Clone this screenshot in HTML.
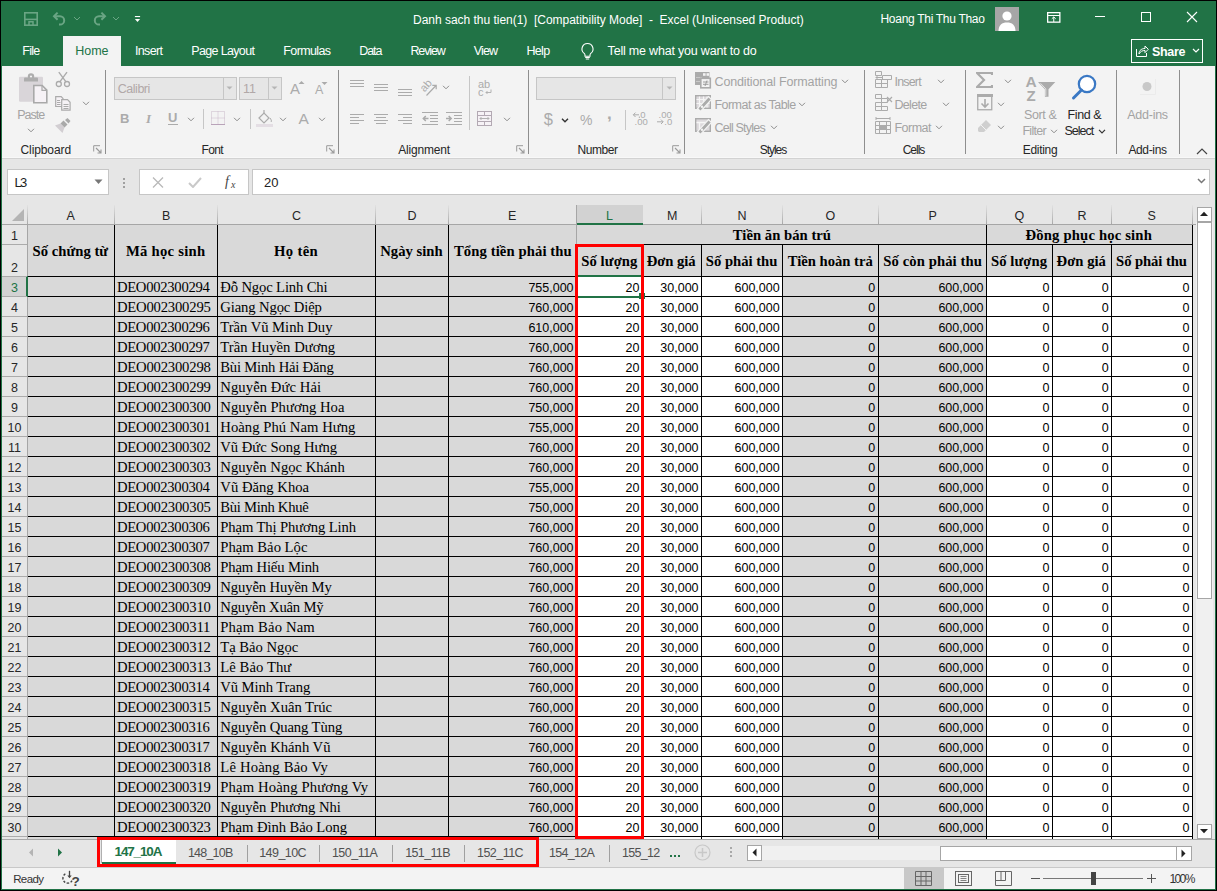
<!DOCTYPE html>
<html><head><meta charset="utf-8"><title>Excel</title>
<style>
html,body{margin:0;padding:0;}
body{width:1217px;height:891px;overflow:hidden;position:relative;font-family:"Liberation Sans",sans-serif;}
.r{position:absolute;box-sizing:content-box;}
.t{position:absolute;white-space:nowrap;}
</style></head><body>
<div class="r" style="left:0px;top:0px;width:1217px;height:891px;background:#000;"></div>
<div class="r" style="left:1px;top:1px;width:1215px;height:889px;background:#217346;"></div>
<svg class="r" style="left:23px;top:11px;" width="16" height="16" viewBox="0 0 16 16"><rect x="1.8" y="1.8" width="12.4" height="12.4" fill="none" stroke="#6aa584" stroke-width="1.6"/><rect x="1" y="7.6" width="14" height="1.6" fill="#6aa584"/><path d="M6 14V10.8h4V14" fill="none" stroke="#6aa584" stroke-width="1.5"/></svg>
<svg class="r" style="left:51px;top:10px;" width="18" height="18" viewBox="0 0 18 18"><path d="M3 6.2h6a4.2 4.2 0 0 1 0 8.4H8" fill="none" stroke="#6aa584" stroke-width="2"/><path d="M6.6 2.6L3 6.2l3.6 3.6" fill="none" stroke="#6aa584" stroke-width="2"/></svg>
<svg class="r" style="left:73px;top:16px;" width="8" height="6" viewBox="0 0 8 6"><path d="M1 1l3 3 3-3" fill="none" stroke="#6aa584" stroke-width="1"/></svg>
<svg class="r" style="left:90px;top:10px;" width="18" height="18" viewBox="0 0 18 18"><path d="M15 6.2H9a4.2 4.2 0 0 0 0 8.4h1" fill="none" stroke="#6aa584" stroke-width="2"/><path d="M11.4 2.6L15 6.2l-3.6 3.6" fill="none" stroke="#6aa584" stroke-width="2"/></svg>
<svg class="r" style="left:112px;top:16px;" width="8" height="6" viewBox="0 0 8 6"><path d="M1 1l3 3 3-3" fill="none" stroke="#6aa584" stroke-width="1"/></svg>
<svg class="r" style="left:134px;top:15px;" width="7" height="8" viewBox="0 0 7 8"><rect x=".9" y="1" width="5.2" height="1.1" fill="#fff"/><path d="M.9 4h5.2L3.5 7z" fill="#fff"/></svg>
<div class="t" style="left:413.00px;top:9.84px;font-size:12px;color:#fff;font-family:'Liberation Sans', sans-serif;line-height:20px;letter-spacing:-0.019px;">Danh sach thu tien(1)&nbsp; [Compatibility Mode]&nbsp; -&nbsp; Excel (Unlicensed Product)</div>
<div class="t" style="left:880.50px;top:8.84px;font-size:12px;color:#fff;font-family:'Liberation Sans', sans-serif;line-height:20px;letter-spacing:-0.294px;">Hoang Thi Thu Thao</div>
<div class="r" style="left:995px;top:7px;width:24px;height:24px;background:#a6a6a6;"></div>
<svg class="r" style="left:995px;top:7px;" width="24" height="24" viewBox="0 0 24 24"><circle cx="12" cy="9" r="4.6" fill="#fff"/><path d="M3.5 24c0-6 3.5-8.5 8.5-8.5s8.5 2.5 8.5 8.5z" fill="#fff"/></svg>
<svg class="r" style="left:1047px;top:12px;" width="14" height="11" viewBox="0 0 14 11"><rect x=".65" y=".65" width="12.2" height="9.5" fill="none" stroke="#fff" stroke-width="1.3"/><path d="M.5 3.5h12.5" stroke="#fff" stroke-width="1"/><path d="M6.75 5v5M4.8 6.8l1.95-1.9 1.95 1.9" fill="none" stroke="#fff" stroke-width="1"/></svg>
<div class="r" style="left:1095px;top:16px;width:10px;height:1px;background:#fff;"></div>
<svg class="r" style="left:1140px;top:11px;" width="12" height="12" viewBox="0 0 12 12"><rect x="1.5" y="1.5" width="9" height="9" fill="none" stroke="#fff" stroke-width="1"/></svg>
<svg class="r" style="left:1186px;top:11px;" width="12" height="12" viewBox="0 0 12 12"><path d="M1 1L11 11M11 1L1 11" stroke="#fff" stroke-width="1.1"/></svg>
<div class="r" style="left:63px;top:36px;width:58px;height:30px;background:#f3f3f3;"></div>
<div class="t" style="left:22.30px;top:40.67px;font-size:12.5px;color:#fff;font-family:'Liberation Sans', sans-serif;line-height:20px;letter-spacing:-0.733px;">File</div>
<div class="t" style="left:135.00px;top:40.67px;font-size:12.5px;color:#fff;font-family:'Liberation Sans', sans-serif;line-height:20px;letter-spacing:-0.660px;">Insert</div>
<div class="t" style="left:191.30px;top:40.67px;font-size:12.5px;color:#fff;font-family:'Liberation Sans', sans-serif;line-height:20px;letter-spacing:-0.660px;">Page Layout</div>
<div class="t" style="left:283.30px;top:40.67px;font-size:12.5px;color:#fff;font-family:'Liberation Sans', sans-serif;line-height:20px;letter-spacing:-0.614px;">Formulas</div>
<div class="t" style="left:359.20px;top:40.67px;font-size:12.5px;color:#fff;font-family:'Liberation Sans', sans-serif;line-height:20px;letter-spacing:-1.067px;">Data</div>
<div class="t" style="left:410.40px;top:40.67px;font-size:12.5px;color:#fff;font-family:'Liberation Sans', sans-serif;line-height:20px;letter-spacing:-1.100px;">Review</div>
<div class="t" style="left:473.80px;top:40.67px;font-size:12.5px;color:#fff;font-family:'Liberation Sans', sans-serif;line-height:20px;letter-spacing:-0.900px;">View</div>
<div class="t" style="left:526.40px;top:40.67px;font-size:12.5px;color:#fff;font-family:'Liberation Sans', sans-serif;line-height:20px;letter-spacing:-0.667px;">Help</div>
<div class="t" style="left:75.30px;top:40.67px;font-size:12.5px;color:#217346;font-family:'Liberation Sans', sans-serif;line-height:20px;letter-spacing:-0.067px;">Home</div>
<svg class="r" style="left:579px;top:42px;" width="17" height="18" viewBox="0 0 17 18"><path d="M8.5 1.5a5.5 5.5 0 0 0-3.3 9.9c.6.5.8 1.1.8 1.8v1h5v-1c0-.7.2-1.3.8-1.8A5.5 5.5 0 0 0 8.5 1.5z" fill="none" stroke="#fff" stroke-width="1.1"/><path d="M6.2 15.5h4.6M6.8 17h3.4" stroke="#fff" stroke-width="1"/></svg>
<div class="t" style="left:607.60px;top:40.67px;font-size:12.5px;color:#fff;font-family:'Liberation Sans', sans-serif;line-height:20px;letter-spacing:-0.196px;">Tell me what you want to do</div>
<div class="r" style="left:1131px;top:39px;width:70px;height:22px;border:1px solid #fff;"></div>
<svg class="r" style="left:1135px;top:44px;" width="14" height="14" viewBox="0 0 14 14"><path d="M1.5 5v7.5h10V9" fill="none" stroke="#fff" stroke-width="1"/><path d="M4 10c0-4 3-5.5 6-5.5V2l3.3 3.3L10 8.6V6.5c-2.5 0-4.6.8-6 3.5z" fill="none" stroke="#fff" stroke-width="1"/></svg>
<div class="t" style="left:1152.00px;top:41.67px;font-size:12.5px;color:#fff;font-family:'Liberation Sans', sans-serif;line-height:20px;font-weight:bold;letter-spacing:-0.325px;">Share</div>
<svg class="r" style="left:1192px;top:48px;" width="8" height="6" viewBox="0 0 8 6"><path d="M1 1l3 3 3-3" fill="none" stroke="#fff" stroke-width="1.2"/></svg>
<div class="r" style="left:2px;top:66px;width:1213px;height:92px;background:#f3f3f3;"></div>
<div class="r" style="left:2px;top:157px;width:1213px;height:1px;background:#f8f8f8;"></div>
<div class="r" style="left:2px;top:158px;width:1213px;height:1px;background:#d2d2d2;"></div>
<div class="r" style="left:105px;top:70px;width:1px;height:84px;background:#8e8e8e;"></div>
<div class="r" style="left:338px;top:70px;width:1px;height:84px;background:#8e8e8e;"></div>
<div class="r" style="left:528px;top:70px;width:1px;height:84px;background:#8e8e8e;"></div>
<div class="r" style="left:684px;top:70px;width:1px;height:84px;background:#8e8e8e;"></div>
<div class="r" style="left:864px;top:70px;width:1px;height:84px;background:#8e8e8e;"></div>
<div class="r" style="left:965px;top:70px;width:1px;height:84px;background:#8e8e8e;"></div>
<div class="r" style="left:1116px;top:70px;width:1px;height:84px;background:#8e8e8e;"></div>
<div class="r" style="left:1179px;top:70px;width:1px;height:84px;background:#8e8e8e;"></div>
<svg class="r" style="left:18px;top:72px;" width="30" height="33" viewBox="0 0 30 33"><rect x="1" y="4.8" width="24" height="25" rx="1.2" fill="#d9d5d9"/><path d="M6 9.5V6.5a1 1 0 0 1 1-1h12a1 1 0 0 1 1 1v3z" fill="#adadad"/><circle cx="13" cy="4.5" r="3.2" fill="#adadad"/><circle cx="13" cy="4.5" r="1.1" fill="#f3f3f3"/><path d="M15.8 13.5h8.4l4.6 4.6v12.7h-13z" fill="#f6f2f6" stroke="#a9a9a9" stroke-width="1.6"/><path d="M24 13.5v4.8h4.8" fill="none" stroke="#a9a9a9" stroke-width="1.2"/></svg>
<div class="t" style="left:17.30px;top:104.67px;font-size:12.5px;color:#a3a3a3;font-family:'Liberation Sans', sans-serif;line-height:20px;letter-spacing:-1.025px;">Paste</div>
<svg class="r" style="left:27px;top:128px;" width="8" height="5" viewBox="0 0 8 5"><path d="M1 .8l3 3 3-3" fill="none" stroke="#8c8c8c" stroke-width="1"/></svg>
<svg class="r" style="left:54px;top:71px;" width="17" height="17" viewBox="0 0 17 17"><circle cx="4.8" cy="13" r="2.5" fill="none" stroke="#ababab" stroke-width="1.3"/><circle cx="13" cy="13" r="2.5" fill="none" stroke="#ababab" stroke-width="1.3"/><path d="M5.8 10.8L13 1.2M12 10.8L4.8 1.2" stroke="#ababab" stroke-width="1.4"/></svg>
<svg class="r" style="left:55px;top:96px;" width="16" height="15" viewBox="0 0 16 15"><path d="M.7 .7h5.5l1.8 1.8v8h-7.3z" fill="#f6f2f6" stroke="#ababab" stroke-width="1.2"/><path d="M6.7 3.7h5.8l2.6 2.6v7.9h-8.4z" fill="#f6f2f6" stroke="#ababab" stroke-width="1.2"/><path d="M2 4.5h3M2 6.5h3.5M2 8.5h3.5M8.5 8.5h5M8.5 10.5h5M8.5 12.5h5" stroke="#ababab" stroke-width="1"/></svg>
<svg class="r" style="left:82px;top:101px;" width="8" height="5" viewBox="0 0 8 5"><path d="M1 .8l3 3 3-3" fill="none" stroke="#8c8c8c" stroke-width="1"/></svg>
<svg class="r" style="left:54px;top:118px;" width="18" height="16" viewBox="0 0 18 16"><path d="M1 7.5l5.5-2 4 4-2 5.5z" fill="#d2ced2"/><path d="M6.5 5.5l3-3 4 4-3 3z" fill="#a9a9a9"/><path d="M11 2l2.5-2 3 3-2 2.5z" fill="#a9a9a9"/></svg>
<div class="t" style="left:20.50px;top:139.84px;font-size:12px;color:#262626;font-family:'Liberation Sans', sans-serif;line-height:20px;letter-spacing:-0.100px;">Clipboard</div>
<svg class="r" style="left:93px;top:145px;" width="9" height="9" viewBox="0 0 9 9"><path d="M.7 6.5V.7h6.3" fill="none" stroke="#9a9a9a" stroke-width="1"/><path d="M3 3l5 5M8 4.5V8H4.5" fill="none" stroke="#9a9a9a" stroke-width="1.1"/></svg>
<div class="r" style="left:114px;top:77px;width:121px;height:21px;border:1px solid #c6c6c6;background:#e6e6e6"></div>
<div class="r" style="left:223px;top:78px;width:1px;height:21px;background:#c6c6c6;"></div>
<div class="t" style="left:117.80px;top:78.67px;font-size:12.5px;color:#b1a8a8;font-family:'Liberation Sans', sans-serif;line-height:20px;letter-spacing:-0.483px;">Calibri</div>
<svg class="r" style="left:225px;top:85px;" width="9" height="6" viewBox="0 0 9 6"><path d="M1.5 1.5h6l-3 3z" fill="#b5b5b5"/></svg>
<div class="r" style="left:239px;top:77px;width:41px;height:21px;border:1px solid #c6c6c6;background:#e6e6e6"></div>
<div class="r" style="left:268px;top:78px;width:1px;height:21px;background:#c6c6c6;"></div>
<div class="t" style="left:243.00px;top:78.67px;font-size:12.5px;color:#b1a8a8;font-family:'Liberation Sans', sans-serif;line-height:20px;">11</div>
<svg class="r" style="left:270px;top:85px;" width="9" height="6" viewBox="0 0 9 6"><path d="M1.5 1.5h6l-3 3z" fill="#b5b5b5"/></svg>
<div class="t" style="left:290.00px;top:78.80px;font-size:15px;color:#ababab;font-family:'Liberation Sans', sans-serif;line-height:20px;">A</div>
<svg class="r" style="left:298px;top:80px;" width="7" height="5" viewBox="0 0 7 5"><path d="M.5 4l3-3 3 3z" fill="#ababab"/></svg>
<div class="t" style="left:315.00px;top:79.67px;font-size:12.5px;color:#ababab;font-family:'Liberation Sans', sans-serif;line-height:20px;">A</div>
<svg class="r" style="left:321px;top:81px;" width="7" height="5" viewBox="0 0 7 5"><path d="M.5 1l3 3 3-3z" fill="#ababab"/></svg>
<div class="t" style="left:120.00px;top:108.50px;font-size:13px;color:#ababab;font-family:'Liberation Sans', sans-serif;line-height:20px;font-weight:bold;">B</div>
<div class="t" style="left:146.00px;top:108.61px;font-size:13px;color:#ababab;font-family:'Liberation Serif', serif;line-height:20px;font-weight:bold;font-style:italic;">I</div>
<div class="t" style="left:168.00px;top:107.50px;font-size:13px;color:#ababab;font-family:'Liberation Sans', sans-serif;line-height:20px;font-weight:bold;">U</div>
<div class="r" style="left:168px;top:124px;width:10px;height:1px;background:#ababab;"></div>
<svg class="r" style="left:187px;top:117px;" width="8" height="5" viewBox="0 0 8 5"><path d="M1 .8l3 3 3-3" fill="none" stroke="#8c8c8c" stroke-width="1"/></svg>
<div class="r" style="left:203px;top:109px;width:1px;height:20px;background:#c6c6c6;"></div>
<svg class="r" style="left:211px;top:111px;" width="15" height="14" viewBox="0 0 15 14"><path d="M.5 .5h13v13h-13zM7 .5v13M.5 7h13" fill="none" stroke="#c9b9c9" stroke-width="1" stroke-dasharray="1 1"/><path d="M0 13.5h14" stroke="#b9a3b9" stroke-width="1"/></svg>
<svg class="r" style="left:233px;top:117px;" width="8" height="5" viewBox="0 0 8 5"><path d="M1 .8l3 3 3-3" fill="none" stroke="#8c8c8c" stroke-width="1"/></svg>
<div class="r" style="left:250px;top:109px;width:1px;height:20px;background:#c6c6c6;"></div>
<svg class="r" style="left:256px;top:109px;" width="18" height="19" viewBox="0 0 18 19"><path d="M3 9l5-5 5 5-5 5z" fill="none" stroke="#ababab" stroke-width="1.2"/><path d="M8 4V1" stroke="#ababab" stroke-width="1.2"/><path d="M14 9c1 1.5 2 3 1 4" stroke="#ababab" fill="none"/><rect x="0" y="15" width="17" height="3" fill="#e4dee4"/></svg>
<svg class="r" style="left:279px;top:117px;" width="8" height="5" viewBox="0 0 8 5"><path d="M1 .8l3 3 3-3" fill="none" stroke="#8c8c8c" stroke-width="1"/></svg>
<div class="t" style="left:298.50px;top:108.63px;font-size:15.5px;color:#ababab;font-family:'Liberation Sans', sans-serif;line-height:20px;">A</div>
<svg class="r" style="left:318px;top:117px;" width="8" height="5" viewBox="0 0 8 5"><path d="M1 .8l3 3 3-3" fill="none" stroke="#8c8c8c" stroke-width="1"/></svg>
<div class="t" style="left:201.60px;top:139.84px;font-size:12px;color:#262626;font-family:'Liberation Sans', sans-serif;line-height:20px;letter-spacing:-0.633px;">Font</div>
<svg class="r" style="left:326px;top:145px;" width="9" height="9" viewBox="0 0 9 9"><path d="M.7 6.5V.7h6.3" fill="none" stroke="#9a9a9a" stroke-width="1"/><path d="M3 3l5 5M8 4.5V8H4.5" fill="none" stroke="#9a9a9a" stroke-width="1.1"/></svg>
<svg class="r" style="left:350px;top:80px;" width="16" height="12" viewBox="0 0 16 12"><rect x="0" y="0" width="14" height="1" fill="#ababab"/><rect x="0" y="3" width="14" height="1" fill="#ababab"/><rect x="0" y="6" width="14" height="1" fill="#ababab"/></svg>
<svg class="r" style="left:374px;top:84px;" width="16" height="12" viewBox="0 0 16 12"><rect x="0" y="0" width="14" height="1" fill="#ababab"/><rect x="0" y="3" width="14" height="1" fill="#ababab"/><rect x="0" y="6" width="14" height="1" fill="#ababab"/></svg>
<svg class="r" style="left:398px;top:89px;" width="16" height="12" viewBox="0 0 16 12"><rect x="0" y="0" width="14" height="1" fill="#ababab"/><rect x="0" y="3" width="14" height="1" fill="#ababab"/><rect x="0" y="6" width="14" height="1" fill="#ababab"/></svg>
<svg class="r" style="left:421px;top:79px;" width="19" height="18" viewBox="0 0 19 18"><text x="0" y="0" font-size="11" fill="#ababab" font-family="Liberation Sans" transform="translate(3.5 13.5) rotate(-48)">ab</text><path d="M5.5 16.5l9.5-10M11.3 6.3h3.9v3.9" fill="none" stroke="#ababab" stroke-width="1.2"/></svg>
<svg class="r" style="left:442px;top:85px;" width="8" height="5" viewBox="0 0 8 5"><path d="M1 .8l3 3 3-3" fill="none" stroke="#8c8c8c" stroke-width="1"/></svg>
<svg class="r" style="left:350px;top:114px;" width="16" height="12" viewBox="0 0 16 12"><rect x="0" y="0" width="14" height="1" fill="#ababab"/><rect x="0" y="3" width="9" height="1" fill="#ababab"/><rect x="0" y="6" width="14" height="1" fill="#ababab"/><rect x="0" y="9" width="9" height="1" fill="#ababab"/></svg>
<svg class="r" style="left:374px;top:114px;" width="16" height="12" viewBox="0 0 16 12"><rect x="0" y="0" width="14" height="1" fill="#ababab"/><rect x="2" y="3" width="10" height="1" fill="#ababab"/><rect x="0" y="6" width="14" height="1" fill="#ababab"/><rect x="2" y="9" width="10" height="1" fill="#ababab"/></svg>
<svg class="r" style="left:398px;top:114px;" width="16" height="12" viewBox="0 0 16 12"><rect x="0" y="0" width="14" height="1" fill="#ababab"/><rect x="5" y="3" width="9" height="1" fill="#ababab"/><rect x="0" y="6" width="14" height="1" fill="#ababab"/><rect x="5" y="9" width="9" height="1" fill="#ababab"/></svg>
<svg class="r" style="left:422px;top:112px;" width="17" height="14" viewBox="0 0 17 14"><rect x="0" y="0" width="16" height="1" fill="#ababab"/><rect x="8" y="3" width="8" height="1" fill="#ababab"/><rect x="8" y="6" width="8" height="1" fill="#ababab"/><rect x="8" y="9" width="8" height="1" fill="#ababab"/><rect x="0" y="12" width="16" height="1" fill="#ababab"/><path d="M6.5 6.5H1.5M3.8 4L1.3 6.5 3.8 9" fill="none" stroke="#ababab" stroke-width="1.5"/></svg>
<svg class="r" style="left:446px;top:112px;" width="17" height="14" viewBox="0 0 17 14"><rect x="0" y="0" width="16" height="1" fill="#ababab"/><rect x="8" y="3" width="8" height="1" fill="#ababab"/><rect x="8" y="6" width="8" height="1" fill="#ababab"/><rect x="8" y="9" width="8" height="1" fill="#ababab"/><rect x="0" y="12" width="16" height="1" fill="#ababab"/><path d="M0 6.5h5M2.7 4l2.5 2.5L2.7 9" fill="none" stroke="#ababab" stroke-width="1.5"/></svg>
<div class="r" style="left:469px;top:76px;width:1px;height:54px;background:#c6c6c6;"></div>
<div class="t" style="left:478.00px;top:74.19px;font-size:11px;color:#ababab;font-family:'Liberation Sans', sans-serif;line-height:20px;">ab</div>
<div class="t" style="left:478.00px;top:82.19px;font-size:11px;color:#ababab;font-family:'Liberation Sans', sans-serif;line-height:20px;">c</div>
<svg class="r" style="left:485px;top:89px;" width="7" height="6" viewBox="0 0 7 6"><path d="M6 .5v3H1M2.5 2L1 3.5 2.5 5" fill="none" stroke="#ababab" stroke-width=".9"/></svg>
<svg class="r" style="left:477px;top:111px;" width="16" height="15" viewBox="0 0 16 15"><rect x=".5" y=".5" width="14" height="14" fill="#f6f2f6" stroke="#b3a9b3"/><path d="M.5 4.5h14M.5 10.5h14M7.5 .5v4M7.5 10.5v4" stroke="#b3a9b3"/><path d="M3 7.5h9M4.5 6l-1.5 1.5 1.5 1.5M10.5 6L12 7.5 10.5 9" fill="none" stroke="#aaa" stroke-width=".9"/></svg>
<svg class="r" style="left:503px;top:117px;" width="8" height="5" viewBox="0 0 8 5"><path d="M1 .8l3 3 3-3" fill="none" stroke="#8c8c8c" stroke-width="1"/></svg>
<div class="t" style="left:398.20px;top:139.84px;font-size:12px;color:#262626;font-family:'Liberation Sans', sans-serif;line-height:20px;letter-spacing:-0.175px;">Alignment</div>
<svg class="r" style="left:516px;top:145px;" width="9" height="9" viewBox="0 0 9 9"><path d="M.7 6.5V.7h6.3" fill="none" stroke="#9a9a9a" stroke-width="1"/><path d="M3 3l5 5M8 4.5V8H4.5" fill="none" stroke="#9a9a9a" stroke-width="1.1"/></svg>
<div class="r" style="left:536px;top:77px;width:138px;height:21px;border:1px solid #c6c6c6;background:#e6e6e6"></div>
<div class="r" style="left:662px;top:78px;width:1px;height:21px;background:#c6c6c6;"></div>
<svg class="r" style="left:665px;top:85px;" width="9" height="6" viewBox="0 0 9 6"><path d="M1.5 1.5h6l-3 3z" fill="#b5b5b5"/></svg>
<div class="t" style="left:543.70px;top:108.78px;font-size:16.5px;color:#ababab;font-family:'Liberation Sans', sans-serif;line-height:20px;">$</div>
<svg class="r" style="left:561px;top:118px;" width="8" height="5" viewBox="0 0 8 5"><path d="M1 .8l3 3 3-3" fill="none" stroke="#333" stroke-width="1.4"/></svg>
<div class="t" style="left:580.00px;top:110.15px;font-size:14px;color:#ababab;font-family:'Liberation Sans', sans-serif;line-height:20px;">%</div>
<div class="t" style="left:607.00px;top:103.61px;font-size:17px;color:#ababab;font-family:'Liberation Sans', sans-serif;line-height:20px;font-weight:bold;">,</div>
<div class="r" style="left:625px;top:110px;width:1px;height:20px;background:#c6c6c6;"></div>
<svg class="r" style="left:632px;top:111px;" width="17" height="15" viewBox="0 0 17 15"><text x="8.3" y="7" font-size="9.5" fill="#ababab" font-family="Liberation Sans">0</text><text x="2.5" y="14" font-size="9.5" fill="#ababab" font-family="Liberation Sans">.00</text><path d="M7 3.8H1.5M3.5 1.6L1.3 3.8 3.5 6" fill="none" stroke="#ababab" stroke-width="1"/><rect x="6.8" y="5.6" width="1.2" height="1.2" fill="#ababab"/></svg>
<svg class="r" style="left:656px;top:111px;" width="17" height="15" viewBox="0 0 17 15"><text x="2.5" y="7" font-size="9.5" fill="#ababab" font-family="Liberation Sans">.00</text><text x="8.3" y="14" font-size="9.5" fill="#ababab" font-family="Liberation Sans">.0</text><path d="M1 10.8h6M5 8.6l2.2 2.2L5 13" fill="none" stroke="#ababab" stroke-width="1"/></svg>
<div class="t" style="left:577.50px;top:139.84px;font-size:12px;color:#262626;font-family:'Liberation Sans', sans-serif;line-height:20px;letter-spacing:-0.460px;">Number</div>
<svg class="r" style="left:672px;top:145px;" width="9" height="9" viewBox="0 0 9 9"><path d="M.7 6.5V.7h6.3" fill="none" stroke="#9a9a9a" stroke-width="1"/><path d="M3 3l5 5M8 4.5V8H4.5" fill="none" stroke="#9a9a9a" stroke-width="1.1"/></svg>
<svg class="r" style="left:694px;top:71px;" width="18" height="18" viewBox="0 0 18 18"><rect x="1" y="1" width="14.5" height="13" fill="#ababab"/><rect x="9" y="2.2" width="2.6" height="2.6" fill="#f3f3f3"/><rect x="12.5" y="2.2" width="2.6" height="2.6" fill="#f3f3f3"/><rect x="2" y="6" width="6" height="1" fill="#c8c8c8"/><rect x="2" y="10" width="6" height="1" fill="#c8c8c8"/><rect x="6.8" y="7.3" width="9.5" height="9.5" fill="#f3f3f3" stroke="#ababab" stroke-width="1.6"/><path d="M9 11h5.5M9 13.3h5.5M13 9.5l-2 5.5" stroke="#9d9d9d" stroke-width="1"/></svg>
<div class="t" style="left:714.50px;top:71.67px;font-size:12.5px;color:#a3a3a3;font-family:'Liberation Sans', sans-serif;line-height:20px;letter-spacing:-0.129px;">Conditional Formatting</div>
<svg class="r" style="left:841px;top:79px;" width="8" height="5" viewBox="0 0 8 5"><path d="M1 .8l3 3 3-3" fill="none" stroke="#8c8c8c" stroke-width="1"/></svg>
<svg class="r" style="left:694px;top:94px;" width="18" height="18" viewBox="0 0 18 18"><rect x="1.7" y="1.7" width="14.6" height="12.6" fill="#dcd9dc" stroke="#ababab" stroke-width="1.4"/><path d="M2.5 5.5h13M2.5 9.5h13M5.5 2.5v11M9.5 2.5v11M13 2.5v11" stroke="#f6f6f6" stroke-width="1.2"/><path d="M3.5 14.6L14.5 2.6 17.5 5.4 6.5 17.4z" fill="#ababab" stroke="#f3f3f3" stroke-width="1.3"/><circle cx="8" cy="12.8" r="1.2" fill="#f3f3f3"/></svg>
<div class="t" style="left:714.50px;top:94.67px;font-size:12.5px;color:#a3a3a3;font-family:'Liberation Sans', sans-serif;line-height:20px;letter-spacing:-0.543px;">Format as Table</div>
<svg class="r" style="left:798px;top:102px;" width="8" height="5" viewBox="0 0 8 5"><path d="M1 .8l3 3 3-3" fill="none" stroke="#8c8c8c" stroke-width="1"/></svg>
<svg class="r" style="left:694px;top:117px;" width="18" height="18" viewBox="0 0 18 18"><rect x="1.7" y="1.7" width="14.6" height="12.6" fill="#dcd9dc" stroke="#ababab" stroke-width="1.4"/><path d="M2.5 5.5h13M5.5 5.5v8" stroke="#f6f6f6" stroke-width="1.4"/><path d="M3.5 14.6L14.5 2.6 17.5 5.4 6.5 17.4z" fill="#ababab" stroke="#f3f3f3" stroke-width="1.3"/><circle cx="8" cy="12.8" r="1.2" fill="#f3f3f3"/></svg>
<div class="t" style="left:714.50px;top:117.67px;font-size:12.5px;color:#a3a3a3;font-family:'Liberation Sans', sans-serif;line-height:20px;letter-spacing:-0.790px;">Cell Styles</div>
<svg class="r" style="left:770px;top:125px;" width="8" height="5" viewBox="0 0 8 5"><path d="M1 .8l3 3 3-3" fill="none" stroke="#8c8c8c" stroke-width="1"/></svg>
<div class="t" style="left:759.70px;top:139.84px;font-size:12px;color:#262626;font-family:'Liberation Sans', sans-serif;line-height:20px;letter-spacing:-1.020px;">Styles</div>
<svg class="r" style="left:875px;top:71px;" width="18" height="17" viewBox="0 0 18 17"><path d="M.5 .5h6v4h-6zM.5 8.5h6v4h-6zM.5 12.5h6v4h-6zM6.5 8.5h6v4h-6zM6.5 12.5h6v4h-6z" fill="none" stroke="#ababab"/><path d="M7.5 4.5h9v4h-9z" fill="none" stroke="#ababab"/><path d="M8 6.5H1M3 4.5l-2 2 2 2" fill="none" stroke="#ababab"/></svg>
<div class="t" style="left:894.50px;top:71.67px;font-size:12.5px;color:#a3a3a3;font-family:'Liberation Sans', sans-serif;line-height:20px;letter-spacing:-0.820px;">Insert</div>
<svg class="r" style="left:937px;top:79px;" width="8" height="5" viewBox="0 0 8 5"><path d="M1 .8l3 3 3-3" fill="none" stroke="#8c8c8c" stroke-width="1"/></svg>
<svg class="r" style="left:875px;top:94px;" width="18" height="17" viewBox="0 0 18 17"><path d="M.5 .5h6v4h-6zM.5 12.5h6v4h-6zM6.5 12.5h6v4h-6zM.5 8.5h6v4h-6z" fill="none" stroke="#ababab"/><path d="M6.5 4.5h6v4h-6z" fill="none" stroke="#ababab"/><path d="M12 3l5 5M17 3l-5 5" stroke="#ababab" stroke-width="1.2"/></svg>
<div class="t" style="left:894.50px;top:94.67px;font-size:12.5px;color:#a3a3a3;font-family:'Liberation Sans', sans-serif;line-height:20px;letter-spacing:-0.700px;">Delete</div>
<svg class="r" style="left:942px;top:102px;" width="8" height="5" viewBox="0 0 8 5"><path d="M1 .8l3 3 3-3" fill="none" stroke="#8c8c8c" stroke-width="1"/></svg>
<svg class="r" style="left:875px;top:117px;" width="18" height="17" viewBox="0 0 18 17"><path d="M.5 4.5h15v12h-15zM.5 8.5h15M.5 12.5h15M4.5 4.5v12M11.5 4.5v12" fill="none" stroke="#ababab"/><rect x="4.5" y="8.5" width="7" height="4" fill="#ababab"/><path d="M1 1.5h14M1 0v3M15 0v3" stroke="#ababab"/></svg>
<div class="t" style="left:894.50px;top:117.67px;font-size:12.5px;color:#a3a3a3;font-family:'Liberation Sans', sans-serif;line-height:20px;letter-spacing:-0.540px;">Format</div>
<svg class="r" style="left:935px;top:125px;" width="8" height="5" viewBox="0 0 8 5"><path d="M1 .8l3 3 3-3" fill="none" stroke="#8c8c8c" stroke-width="1"/></svg>
<div class="t" style="left:902.70px;top:139.84px;font-size:12px;color:#262626;font-family:'Liberation Sans', sans-serif;line-height:20px;letter-spacing:-1.000px;">Cells</div>
<svg class="r" style="left:976px;top:72px;" width="17" height="16" viewBox="0 0 17 16"><path d="M16 3V1H1l7 7-7 7h15v-2" fill="none" stroke="#ababab" stroke-width="2.2"/></svg>
<svg class="r" style="left:1004px;top:79px;" width="8" height="5" viewBox="0 0 8 5"><path d="M1 .8l3 3 3-3" fill="none" stroke="#8c8c8c" stroke-width="1"/></svg>
<svg class="r" style="left:977px;top:94px;" width="16" height="17" viewBox="0 0 16 17"><rect x=".75" y=".75" width="14" height="15" fill="none" stroke="#ababab" stroke-width="1.3"/><rect x="0" y="0" width="16" height="3" fill="#ababab"/><path d="M8 5v8M4.5 9.5L8 13l3.5-3.5" fill="none" stroke="#ababab" stroke-width="1.6"/></svg>
<svg class="r" style="left:997px;top:102px;" width="8" height="5" viewBox="0 0 8 5"><path d="M1 .8l3 3 3-3" fill="none" stroke="#8c8c8c" stroke-width="1"/></svg>
<svg class="r" style="left:977px;top:118px;" width="15" height="14" viewBox="0 0 15 14"><path d="M1 10l8-8 5 5-8 8-3 0-2-2z" fill="#cfcfcf"/><path d="M4 7l5 5" stroke="#f3f3f3" stroke-width="1"/></svg>
<svg class="r" style="left:997px;top:125px;" width="8" height="5" viewBox="0 0 8 5"><path d="M1 .8l3 3 3-3" fill="none" stroke="#8c8c8c" stroke-width="1"/></svg>
<svg class="r" style="left:1025px;top:74px;" width="32" height="28" viewBox="0 0 32 28"><text x="0.5" y="13" font-size="15.5" font-weight="bold" fill="#ababab" font-family="Liberation Sans">A</text><text x="1.5" y="26.6" font-size="15" font-weight="bold" fill="#ababab" font-family="Liberation Sans">Z</text><path d="M13 8h17.3l-6.8 7.3v7.4h-3.6v-7.4z" fill="#ababab"/><path d="M15.5 9.3l5.3 5.6v7" fill="none" stroke="#e9e9e9" stroke-width=".9"/></svg>
<div class="t" style="left:1024.00px;top:104.67px;font-size:12.5px;color:#a3a3a3;font-family:'Liberation Sans', sans-serif;line-height:20px;letter-spacing:-0.400px;">Sort &amp;</div>
<div class="t" style="left:1022.40px;top:120.67px;font-size:12.5px;color:#a3a3a3;font-family:'Liberation Sans', sans-serif;line-height:20px;letter-spacing:-0.700px;">Filter</div>
<svg class="r" style="left:1050px;top:129px;" width="8" height="5" viewBox="0 0 8 5"><path d="M1 .8l3 3 3-3" fill="none" stroke="#8c8c8c" stroke-width="1"/></svg>
<svg class="r" style="left:1070px;top:73px;overflow:visible" width="22" height="23" viewBox="0 0 22 23"><circle cx="17" cy="11" r="8.2" fill="#fff" stroke="#3a78c4" stroke-width="2.2"/><path d="M11.5 17L3.5 25" stroke="#3a78c4" stroke-width="3" stroke-linecap="round"/></svg>
<div class="t" style="left:1067.60px;top:104.67px;font-size:12.5px;color:#262626;font-family:'Liberation Sans', sans-serif;line-height:20px;letter-spacing:-0.420px;">Find &amp;</div>
<div class="t" style="left:1064.40px;top:120.67px;font-size:12.5px;color:#262626;font-family:'Liberation Sans', sans-serif;line-height:20px;letter-spacing:-1.000px;">Select</div>
<svg class="r" style="left:1098px;top:129px;" width="8" height="5" viewBox="0 0 8 5"><path d="M1 .8l3 3 3-3" fill="none" stroke="#333" stroke-width="1.2"/></svg>
<div class="t" style="left:1022.70px;top:139.84px;font-size:12px;color:#262626;font-family:'Liberation Sans', sans-serif;line-height:20px;letter-spacing:-0.283px;">Editing</div>
<svg class="r" style="left:1140px;top:79px;filter:blur(.4px)" width="16" height="16" viewBox="0 0 16 16"><circle cx="7" cy="7.5" r="4.5" fill="#c8c8c8"/><path d="M15.5 0v15.5H0" fill="none" stroke="#ebebeb"/></svg>
<div class="t" style="left:1127.30px;top:104.67px;font-size:12.5px;color:#a3a3a3;font-family:'Liberation Sans', sans-serif;line-height:20px;letter-spacing:-0.267px;">Add-ins</div>
<div class="t" style="left:1128.40px;top:139.84px;font-size:12px;color:#262626;font-family:'Liberation Sans', sans-serif;line-height:20px;letter-spacing:-0.350px;">Add-ins</div>
<svg class="r" style="left:1196px;top:148px;" width="12" height="7" viewBox="0 0 12 7"><path d="M1 6l5-5 5 5" fill="none" stroke="#444" stroke-width="1.2"/></svg>
<div class="r" style="left:2px;top:159px;width:1213px;height:46px;background:#e6e6e6;"></div>
<div class="r" style="left:7px;top:169px;width:100px;height:24px;border:1px solid #c6c6c6;background:#fff"></div>
<div class="t" style="left:14.40px;top:172.50px;font-size:13px;color:#222;font-family:'Liberation Sans', sans-serif;line-height:20px;letter-spacing:-1.700px;">L3</div>
<svg class="r" style="left:94px;top:178.5px;" width="9" height="6" viewBox="0 0 9 6"><path d="M.5 .5h8l-4 4.5z" fill="#777"/></svg>
<div class="r" style="left:123px;top:178px;width:2px;height:2px;background:#a0a0a0;"></div>
<div class="r" style="left:123px;top:182px;width:2px;height:2px;background:#a0a0a0;"></div>
<div class="r" style="left:123px;top:186px;width:2px;height:2px;background:#a0a0a0;"></div>
<div class="r" style="left:139px;top:169px;width:108px;height:24px;border:1px solid #c6c6c6;background:#fff"></div>
<svg class="r" style="left:152px;top:177px;" width="12" height="11" viewBox="0 0 12 11"><path d="M1 .5l10 10M11 .5l-10 10" stroke="#b9b9b9" stroke-width="1.3"/></svg>
<svg class="r" style="left:188px;top:177px;" width="14" height="11" viewBox="0 0 14 11"><path d="M1 6l4 4 8-9" fill="none" stroke="#c9c9c9" stroke-width="2"/></svg>
<div class="t" style="left:225.00px;top:172.28px;font-size:14px;color:#444;font-family:'Liberation Serif', serif;line-height:20px;font-style:italic;">f</div>
<div class="t" style="left:231.00px;top:174.62px;font-size:10px;color:#444;font-family:'Liberation Serif', serif;line-height:20px;font-style:italic;">x</div>
<div class="r" style="left:252px;top:169px;width:956px;height:24px;border:1px solid #c6c6c6;background:#fff"></div>
<div class="t" style="left:264.00px;top:172.50px;font-size:13px;color:#222;font-family:'Liberation Sans', sans-serif;line-height:20px;">20</div>
<svg class="r" style="left:1197px;top:178px;" width="9" height="6" viewBox="0 0 9 6"><path d="M1 1l3.5 3.5L8 1" fill="none" stroke="#777" stroke-width="1.5"/></svg>
<div class="r" style="left:2px;top:205px;width:1213px;height:19px;background:#e6e6e6;"></div>
<svg class="r" style="left:12px;top:209px;" width="13" height="12" viewBox="0 0 13 12"><path d="M12 0v12H0z" fill="#b4b4b4"/></svg>
<div class="r" style="left:577px;top:205px;width:66px;height:18px;background:#d2d2d2;"></div>
<div class="r" style="left:27px;top:205px;width:1px;height:19px;background:linear-gradient(#e2e2e2,#a9a9a9)"></div>
<div class="r" style="left:114px;top:205px;width:1px;height:19px;background:linear-gradient(#e2e2e2,#a9a9a9)"></div>
<div class="r" style="left:217px;top:205px;width:1px;height:19px;background:linear-gradient(#e2e2e2,#a9a9a9)"></div>
<div class="r" style="left:375px;top:205px;width:1px;height:19px;background:linear-gradient(#e2e2e2,#a9a9a9)"></div>
<div class="r" style="left:448px;top:205px;width:1px;height:19px;background:linear-gradient(#e2e2e2,#a9a9a9)"></div>
<div class="r" style="left:576px;top:205px;width:1px;height:19px;background:linear-gradient(#e2e2e2,#a9a9a9)"></div>
<div class="r" style="left:701px;top:205px;width:1px;height:19px;background:linear-gradient(#e2e2e2,#a9a9a9)"></div>
<div class="r" style="left:782px;top:205px;width:1px;height:19px;background:linear-gradient(#e2e2e2,#a9a9a9)"></div>
<div class="r" style="left:878px;top:205px;width:1px;height:19px;background:linear-gradient(#e2e2e2,#a9a9a9)"></div>
<div class="r" style="left:986px;top:205px;width:1px;height:19px;background:linear-gradient(#e2e2e2,#a9a9a9)"></div>
<div class="r" style="left:1052px;top:205px;width:1px;height:19px;background:linear-gradient(#e2e2e2,#a9a9a9)"></div>
<div class="r" style="left:1111px;top:205px;width:1px;height:19px;background:linear-gradient(#e2e2e2,#a9a9a9)"></div>
<div class="r" style="left:1192px;top:205px;width:1px;height:19px;background:linear-gradient(#e2e2e2,#a9a9a9)"></div>
<div class="r" style="left:576px;top:205px;width:1px;height:19px;background:#a6a6a6;"></div>
<div class="r" style="left:2px;top:224px;width:1194px;height:1px;background:#a6a6a6;"></div>
<div class="r" style="left:577px;top:223px;width:66px;height:2px;background:#217346;"></div>
<div class="t" style="left:66.50px;top:205.67px;font-size:12.5px;color:#262626;font-family:'Liberation Sans', sans-serif;line-height:20px;">A</div>
<div class="t" style="left:162.00px;top:205.67px;font-size:12.5px;color:#262626;font-family:'Liberation Sans', sans-serif;line-height:20px;">B</div>
<div class="t" style="left:292.00px;top:205.67px;font-size:12.5px;color:#262626;font-family:'Liberation Sans', sans-serif;line-height:20px;">C</div>
<div class="t" style="left:407.50px;top:205.67px;font-size:12.5px;color:#262626;font-family:'Liberation Sans', sans-serif;line-height:20px;">D</div>
<div class="t" style="left:508.00px;top:205.67px;font-size:12.5px;color:#262626;font-family:'Liberation Sans', sans-serif;line-height:20px;">E</div>
<div class="t" style="left:606.00px;top:205.67px;font-size:12.5px;color:#217346;font-family:'Liberation Sans', sans-serif;line-height:20px;">L</div>
<div class="t" style="left:667.00px;top:205.67px;font-size:12.5px;color:#262626;font-family:'Liberation Sans', sans-serif;line-height:20px;">M</div>
<div class="t" style="left:737.50px;top:205.67px;font-size:12.5px;color:#262626;font-family:'Liberation Sans', sans-serif;line-height:20px;">N</div>
<div class="t" style="left:825.50px;top:205.67px;font-size:12.5px;color:#262626;font-family:'Liberation Sans', sans-serif;line-height:20px;">O</div>
<div class="t" style="left:928.50px;top:205.67px;font-size:12.5px;color:#262626;font-family:'Liberation Sans', sans-serif;line-height:20px;">P</div>
<div class="t" style="left:1014.50px;top:205.67px;font-size:12.5px;color:#262626;font-family:'Liberation Sans', sans-serif;line-height:20px;">Q</div>
<div class="t" style="left:1077.50px;top:205.67px;font-size:12.5px;color:#262626;font-family:'Liberation Sans', sans-serif;line-height:20px;">R</div>
<div class="t" style="left:1147.50px;top:205.67px;font-size:12.5px;color:#262626;font-family:'Liberation Sans', sans-serif;line-height:20px;">S</div>
<div class="r" style="left:2px;top:225px;width:25px;height:614px;background:#e6e6e6;"></div>
<div class="r" style="left:27px;top:225px;width:1px;height:614px;background:#a6a6a6;"></div>
<div class="r" style="left:2px;top:277px;width:24px;height:19px;background:#d2d2d2;"></div>
<div class="r" style="left:26px;top:276px;width:2px;height:21px;background:#217346;"></div>
<div class="r" style="left:2px;top:244px;width:25px;height:1px;background:#ababab;"></div>
<div class="r" style="left:2px;top:276px;width:25px;height:1px;background:#ababab;"></div>
<div class="r" style="left:2px;top:296px;width:25px;height:1px;background:#ababab;"></div>
<div class="r" style="left:2px;top:316px;width:25px;height:1px;background:#ababab;"></div>
<div class="r" style="left:2px;top:336px;width:25px;height:1px;background:#ababab;"></div>
<div class="r" style="left:2px;top:356px;width:25px;height:1px;background:#ababab;"></div>
<div class="r" style="left:2px;top:376px;width:25px;height:1px;background:#ababab;"></div>
<div class="r" style="left:2px;top:396px;width:25px;height:1px;background:#ababab;"></div>
<div class="r" style="left:2px;top:416px;width:25px;height:1px;background:#ababab;"></div>
<div class="r" style="left:2px;top:436px;width:25px;height:1px;background:#ababab;"></div>
<div class="r" style="left:2px;top:456px;width:25px;height:1px;background:#ababab;"></div>
<div class="r" style="left:2px;top:476px;width:25px;height:1px;background:#ababab;"></div>
<div class="r" style="left:2px;top:496px;width:25px;height:1px;background:#ababab;"></div>
<div class="r" style="left:2px;top:516px;width:25px;height:1px;background:#ababab;"></div>
<div class="r" style="left:2px;top:536px;width:25px;height:1px;background:#ababab;"></div>
<div class="r" style="left:2px;top:556px;width:25px;height:1px;background:#ababab;"></div>
<div class="r" style="left:2px;top:576px;width:25px;height:1px;background:#ababab;"></div>
<div class="r" style="left:2px;top:596px;width:25px;height:1px;background:#ababab;"></div>
<div class="r" style="left:2px;top:616px;width:25px;height:1px;background:#ababab;"></div>
<div class="r" style="left:2px;top:636px;width:25px;height:1px;background:#ababab;"></div>
<div class="r" style="left:2px;top:656px;width:25px;height:1px;background:#ababab;"></div>
<div class="r" style="left:2px;top:676px;width:25px;height:1px;background:#ababab;"></div>
<div class="r" style="left:2px;top:696px;width:25px;height:1px;background:#ababab;"></div>
<div class="r" style="left:2px;top:716px;width:25px;height:1px;background:#ababab;"></div>
<div class="r" style="left:2px;top:736px;width:25px;height:1px;background:#ababab;"></div>
<div class="r" style="left:2px;top:756px;width:25px;height:1px;background:#ababab;"></div>
<div class="r" style="left:2px;top:776px;width:25px;height:1px;background:#ababab;"></div>
<div class="r" style="left:2px;top:796px;width:25px;height:1px;background:#ababab;"></div>
<div class="r" style="left:2px;top:816px;width:25px;height:1px;background:#ababab;"></div>
<div class="r" style="left:2px;top:836px;width:25px;height:1px;background:#ababab;"></div>
<div class="t" style="left:11.00px;top:225.67px;font-size:12.5px;color:#262626;font-family:'Liberation Sans', sans-serif;line-height:20px;">1</div>
<div class="t" style="left:11.00px;top:257.67px;font-size:12.5px;color:#262626;font-family:'Liberation Sans', sans-serif;line-height:20px;">2</div>
<div class="t" style="left:11.00px;top:277.67px;font-size:12.5px;color:#217346;font-family:'Liberation Sans', sans-serif;line-height:20px;">3</div>
<div class="t" style="left:11.00px;top:297.67px;font-size:12.5px;color:#262626;font-family:'Liberation Sans', sans-serif;line-height:20px;">4</div>
<div class="t" style="left:11.00px;top:317.67px;font-size:12.5px;color:#262626;font-family:'Liberation Sans', sans-serif;line-height:20px;">5</div>
<div class="t" style="left:11.00px;top:337.67px;font-size:12.5px;color:#262626;font-family:'Liberation Sans', sans-serif;line-height:20px;">6</div>
<div class="t" style="left:11.00px;top:357.67px;font-size:12.5px;color:#262626;font-family:'Liberation Sans', sans-serif;line-height:20px;">7</div>
<div class="t" style="left:11.00px;top:377.67px;font-size:12.5px;color:#262626;font-family:'Liberation Sans', sans-serif;line-height:20px;">8</div>
<div class="t" style="left:11.00px;top:397.67px;font-size:12.5px;color:#262626;font-family:'Liberation Sans', sans-serif;line-height:20px;">9</div>
<div class="t" style="left:7.50px;top:417.67px;font-size:12.5px;color:#262626;font-family:'Liberation Sans', sans-serif;line-height:20px;">10</div>
<div class="t" style="left:8.00px;top:437.67px;font-size:12.5px;color:#262626;font-family:'Liberation Sans', sans-serif;line-height:20px;">11</div>
<div class="t" style="left:7.50px;top:457.67px;font-size:12.5px;color:#262626;font-family:'Liberation Sans', sans-serif;line-height:20px;">12</div>
<div class="t" style="left:7.50px;top:477.67px;font-size:12.5px;color:#262626;font-family:'Liberation Sans', sans-serif;line-height:20px;">13</div>
<div class="t" style="left:7.50px;top:497.67px;font-size:12.5px;color:#262626;font-family:'Liberation Sans', sans-serif;line-height:20px;">14</div>
<div class="t" style="left:7.50px;top:517.67px;font-size:12.5px;color:#262626;font-family:'Liberation Sans', sans-serif;line-height:20px;">15</div>
<div class="t" style="left:7.50px;top:537.67px;font-size:12.5px;color:#262626;font-family:'Liberation Sans', sans-serif;line-height:20px;">16</div>
<div class="t" style="left:7.50px;top:557.67px;font-size:12.5px;color:#262626;font-family:'Liberation Sans', sans-serif;line-height:20px;">17</div>
<div class="t" style="left:7.50px;top:577.67px;font-size:12.5px;color:#262626;font-family:'Liberation Sans', sans-serif;line-height:20px;">18</div>
<div class="t" style="left:7.50px;top:597.67px;font-size:12.5px;color:#262626;font-family:'Liberation Sans', sans-serif;line-height:20px;">19</div>
<div class="t" style="left:7.50px;top:617.67px;font-size:12.5px;color:#262626;font-family:'Liberation Sans', sans-serif;line-height:20px;">20</div>
<div class="t" style="left:7.50px;top:637.67px;font-size:12.5px;color:#262626;font-family:'Liberation Sans', sans-serif;line-height:20px;">21</div>
<div class="t" style="left:7.50px;top:657.67px;font-size:12.5px;color:#262626;font-family:'Liberation Sans', sans-serif;line-height:20px;">22</div>
<div class="t" style="left:7.50px;top:677.67px;font-size:12.5px;color:#262626;font-family:'Liberation Sans', sans-serif;line-height:20px;">23</div>
<div class="t" style="left:7.50px;top:697.67px;font-size:12.5px;color:#262626;font-family:'Liberation Sans', sans-serif;line-height:20px;">24</div>
<div class="t" style="left:7.50px;top:717.67px;font-size:12.5px;color:#262626;font-family:'Liberation Sans', sans-serif;line-height:20px;">25</div>
<div class="t" style="left:7.50px;top:737.67px;font-size:12.5px;color:#262626;font-family:'Liberation Sans', sans-serif;line-height:20px;">26</div>
<div class="t" style="left:7.50px;top:757.67px;font-size:12.5px;color:#262626;font-family:'Liberation Sans', sans-serif;line-height:20px;">27</div>
<div class="t" style="left:7.50px;top:777.67px;font-size:12.5px;color:#262626;font-family:'Liberation Sans', sans-serif;line-height:20px;">28</div>
<div class="t" style="left:7.50px;top:797.67px;font-size:12.5px;color:#262626;font-family:'Liberation Sans', sans-serif;line-height:20px;">29</div>
<div class="t" style="left:7.50px;top:817.67px;font-size:12.5px;color:#262626;font-family:'Liberation Sans', sans-serif;line-height:20px;">30</div>
<div class="r" style="left:28px;top:225px;width:1164px;height:52px;background:#d9d9d9;"></div>
<div class="r" style="left:1193px;top:225px;width:3px;height:614px;background:#e6e6e6;"></div>
<div class="r" style="left:28px;top:277px;width:548px;height:562px;background:#d9d9d9;"></div>
<div class="r" style="left:577px;top:277px;width:205px;height:562px;background:#fff;"></div>
<div class="r" style="left:783px;top:277px;width:203px;height:562px;background:#d9d9d9;"></div>
<div class="r" style="left:987px;top:277px;width:205px;height:562px;background:#fff;"></div>
<div class="r" style="left:576px;top:225px;width:1px;height:19px;background:#a6a6a6;"></div>
<div class="r" style="left:576px;top:244px;width:617px;height:1px;background:#000;"></div>
<div class="r" style="left:28px;top:276px;width:1165px;height:1px;background:#000;"></div>
<div class="r" style="left:28px;top:296px;width:1165px;height:1px;background:#000;"></div>
<div class="r" style="left:28px;top:316px;width:1165px;height:1px;background:#000;"></div>
<div class="r" style="left:28px;top:336px;width:1165px;height:1px;background:#000;"></div>
<div class="r" style="left:28px;top:356px;width:1165px;height:1px;background:#000;"></div>
<div class="r" style="left:28px;top:376px;width:1165px;height:1px;background:#000;"></div>
<div class="r" style="left:28px;top:396px;width:1165px;height:1px;background:#000;"></div>
<div class="r" style="left:28px;top:416px;width:1165px;height:1px;background:#000;"></div>
<div class="r" style="left:28px;top:436px;width:1165px;height:1px;background:#000;"></div>
<div class="r" style="left:28px;top:456px;width:1165px;height:1px;background:#000;"></div>
<div class="r" style="left:28px;top:476px;width:1165px;height:1px;background:#000;"></div>
<div class="r" style="left:28px;top:496px;width:1165px;height:1px;background:#000;"></div>
<div class="r" style="left:28px;top:516px;width:1165px;height:1px;background:#000;"></div>
<div class="r" style="left:28px;top:536px;width:1165px;height:1px;background:#000;"></div>
<div class="r" style="left:28px;top:556px;width:1165px;height:1px;background:#000;"></div>
<div class="r" style="left:28px;top:576px;width:1165px;height:1px;background:#000;"></div>
<div class="r" style="left:28px;top:596px;width:1165px;height:1px;background:#000;"></div>
<div class="r" style="left:28px;top:616px;width:1165px;height:1px;background:#000;"></div>
<div class="r" style="left:28px;top:636px;width:1165px;height:1px;background:#000;"></div>
<div class="r" style="left:28px;top:656px;width:1165px;height:1px;background:#000;"></div>
<div class="r" style="left:28px;top:676px;width:1165px;height:1px;background:#000;"></div>
<div class="r" style="left:28px;top:696px;width:1165px;height:1px;background:#000;"></div>
<div class="r" style="left:28px;top:716px;width:1165px;height:1px;background:#000;"></div>
<div class="r" style="left:28px;top:736px;width:1165px;height:1px;background:#000;"></div>
<div class="r" style="left:28px;top:756px;width:1165px;height:1px;background:#000;"></div>
<div class="r" style="left:28px;top:776px;width:1165px;height:1px;background:#000;"></div>
<div class="r" style="left:28px;top:796px;width:1165px;height:1px;background:#000;"></div>
<div class="r" style="left:28px;top:816px;width:1165px;height:1px;background:#000;"></div>
<div class="r" style="left:28px;top:836px;width:1165px;height:1px;background:#000;"></div>
<div class="r" style="left:114px;top:225px;width:1px;height:614px;background:#000;"></div>
<div class="r" style="left:217px;top:225px;width:1px;height:614px;background:#000;"></div>
<div class="r" style="left:375px;top:225px;width:1px;height:614px;background:#000;"></div>
<div class="r" style="left:448px;top:225px;width:1px;height:614px;background:#000;"></div>
<div class="r" style="left:986px;top:225px;width:1px;height:614px;background:#000;"></div>
<div class="r" style="left:1192px;top:225px;width:1px;height:614px;background:#000;"></div>
<div class="r" style="left:642px;top:244px;width:1px;height:595px;background:#000;"></div>
<div class="r" style="left:701px;top:244px;width:1px;height:595px;background:#000;"></div>
<div class="r" style="left:782px;top:244px;width:1px;height:595px;background:#000;"></div>
<div class="r" style="left:878px;top:244px;width:1px;height:595px;background:#000;"></div>
<div class="r" style="left:1052px;top:244px;width:1px;height:595px;background:#000;"></div>
<div class="r" style="left:1111px;top:244px;width:1px;height:595px;background:#000;"></div>
<div class="r" style="left:576px;top:244px;width:1px;height:595px;background:#000;"></div>
<div class="t" style="left:32.50px;top:240.75px;font-size:14.67px;color:#000;font-family:'Liberation Serif', serif;line-height:20px;font-weight:bold;letter-spacing:0.020px;">Số chứng từ</div>
<div class="t" style="left:126.00px;top:240.75px;font-size:14.67px;color:#000;font-family:'Liberation Serif', serif;line-height:20px;font-weight:bold;letter-spacing:0.260px;">Mã học sinh</div>
<div class="t" style="left:274.00px;top:240.75px;font-size:14.67px;color:#000;font-family:'Liberation Serif', serif;line-height:20px;font-weight:bold;letter-spacing:0.360px;">Họ tên</div>
<div class="t" style="left:380.20px;top:240.75px;font-size:14.67px;color:#000;font-family:'Liberation Serif', serif;line-height:20px;font-weight:bold;letter-spacing:0.025px;">Ngày sinh</div>
<div class="t" style="left:453.90px;top:240.75px;font-size:14.67px;color:#000;font-family:'Liberation Serif', serif;line-height:20px;font-weight:bold;letter-spacing:0.106px;">Tổng tiền phải thu</div>
<div class="t" style="left:732.80px;top:224.75px;font-size:14.67px;color:#000;font-family:'Liberation Serif', serif;line-height:20px;font-weight:bold;letter-spacing:0.021px;">Tiền ăn bán trú</div>
<div class="t" style="left:1025.50px;top:224.75px;font-size:14.67px;color:#000;font-family:'Liberation Serif', serif;line-height:20px;font-weight:bold;letter-spacing:0.171px;">Đồng phục học sinh</div>
<div class="t" style="left:581.20px;top:251.05px;font-size:14.67px;color:#000;font-family:'Liberation Serif', serif;line-height:20px;font-weight:bold;letter-spacing:0.086px;">Số lượng</div>
<div class="t" style="left:646.80px;top:251.05px;font-size:14.67px;color:#000;font-family:'Liberation Serif', serif;line-height:20px;font-weight:bold;letter-spacing:-0.083px;">Đơn giá</div>
<div class="t" style="left:705.80px;top:251.05px;font-size:14.67px;color:#000;font-family:'Liberation Serif', serif;line-height:20px;font-weight:bold;letter-spacing:-0.020px;">Số phải thu</div>
<div class="t" style="left:787.80px;top:251.05px;font-size:14.67px;color:#000;font-family:'Liberation Serif', serif;line-height:20px;font-weight:bold;letter-spacing:-0.025px;">Tiền hoàn trả</div>
<div class="t" style="left:883.20px;top:251.05px;font-size:14.67px;color:#000;font-family:'Liberation Serif', serif;line-height:20px;font-weight:bold;letter-spacing:0.100px;">Số còn phải thu</div>
<div class="t" style="left:991.00px;top:251.05px;font-size:14.67px;color:#000;font-family:'Liberation Serif', serif;line-height:20px;font-weight:bold;letter-spacing:0.071px;">Số lượng</div>
<div class="t" style="left:1056.60px;top:251.05px;font-size:14.67px;color:#000;font-family:'Liberation Serif', serif;line-height:20px;font-weight:bold;letter-spacing:0.017px;">Đơn giá</div>
<div class="t" style="left:1116.10px;top:251.05px;font-size:14.67px;color:#000;font-family:'Liberation Serif', serif;line-height:20px;font-weight:bold;letter-spacing:-0.090px;">Số phải thu</div>
<div class="t" style="left:116.90px;top:277.05px;font-size:14.67px;color:#000;font-family:'Liberation Serif', serif;line-height:20px;letter-spacing:-0.282px;">DEO002300294</div>
<div class="t" style="left:220.30px;top:277.05px;font-size:14.67px;color:#000;font-family:'Liberation Serif', serif;line-height:20px;letter-spacing:-0.147px;">Đỗ Ngọc Linh Chi</div>
<div class="t" style="left:528.40px;top:277.67px;font-size:12.5px;color:#000;font-family:'Liberation Sans', sans-serif;line-height:20px;">755,000</div>
<div class="t" style="left:625.50px;top:277.67px;font-size:12.5px;color:#000;font-family:'Liberation Sans', sans-serif;line-height:20px;">20</div>
<div class="t" style="left:660.30px;top:277.67px;font-size:12.5px;color:#000;font-family:'Liberation Sans', sans-serif;line-height:20px;">30,000</div>
<div class="t" style="left:734.50px;top:277.67px;font-size:12.5px;color:#000;font-family:'Liberation Sans', sans-serif;line-height:20px;">600,000</div>
<div class="t" style="left:868.20px;top:277.67px;font-size:12.5px;color:#000;font-family:'Liberation Sans', sans-serif;line-height:20px;">0</div>
<div class="t" style="left:938.40px;top:277.67px;font-size:12.5px;color:#000;font-family:'Liberation Sans', sans-serif;line-height:20px;">600,000</div>
<div class="t" style="left:1042.60px;top:277.67px;font-size:12.5px;color:#000;font-family:'Liberation Sans', sans-serif;line-height:20px;">0</div>
<div class="t" style="left:1101.80px;top:277.67px;font-size:12.5px;color:#000;font-family:'Liberation Sans', sans-serif;line-height:20px;">0</div>
<div class="t" style="left:1182.40px;top:277.67px;font-size:12.5px;color:#000;font-family:'Liberation Sans', sans-serif;line-height:20px;">0</div>
<div class="t" style="left:116.90px;top:297.05px;font-size:14.67px;color:#000;font-family:'Liberation Serif', serif;line-height:20px;letter-spacing:-0.191px;">DEO002300295</div>
<div class="t" style="left:220.30px;top:297.05px;font-size:14.67px;color:#000;font-family:'Liberation Serif', serif;line-height:20px;letter-spacing:-0.129px;">Giang Ngọc Diệp</div>
<div class="t" style="left:528.40px;top:297.67px;font-size:12.5px;color:#000;font-family:'Liberation Sans', sans-serif;line-height:20px;">760,000</div>
<div class="t" style="left:625.50px;top:297.67px;font-size:12.5px;color:#000;font-family:'Liberation Sans', sans-serif;line-height:20px;">20</div>
<div class="t" style="left:660.30px;top:297.67px;font-size:12.5px;color:#000;font-family:'Liberation Sans', sans-serif;line-height:20px;">30,000</div>
<div class="t" style="left:734.50px;top:297.67px;font-size:12.5px;color:#000;font-family:'Liberation Sans', sans-serif;line-height:20px;">600,000</div>
<div class="t" style="left:868.20px;top:297.67px;font-size:12.5px;color:#000;font-family:'Liberation Sans', sans-serif;line-height:20px;">0</div>
<div class="t" style="left:938.40px;top:297.67px;font-size:12.5px;color:#000;font-family:'Liberation Sans', sans-serif;line-height:20px;">600,000</div>
<div class="t" style="left:1042.60px;top:297.67px;font-size:12.5px;color:#000;font-family:'Liberation Sans', sans-serif;line-height:20px;">0</div>
<div class="t" style="left:1101.80px;top:297.67px;font-size:12.5px;color:#000;font-family:'Liberation Sans', sans-serif;line-height:20px;">0</div>
<div class="t" style="left:1182.40px;top:297.67px;font-size:12.5px;color:#000;font-family:'Liberation Sans', sans-serif;line-height:20px;">0</div>
<div class="t" style="left:116.90px;top:317.05px;font-size:14.67px;color:#000;font-family:'Liberation Serif', serif;line-height:20px;letter-spacing:-0.282px;">DEO002300296</div>
<div class="t" style="left:220.30px;top:317.05px;font-size:14.67px;color:#000;font-family:'Liberation Serif', serif;line-height:20px;letter-spacing:-0.040px;">Trần Vũ Minh Duy</div>
<div class="t" style="left:528.40px;top:317.67px;font-size:12.5px;color:#000;font-family:'Liberation Sans', sans-serif;line-height:20px;">610,000</div>
<div class="t" style="left:625.50px;top:317.67px;font-size:12.5px;color:#000;font-family:'Liberation Sans', sans-serif;line-height:20px;">20</div>
<div class="t" style="left:660.30px;top:317.67px;font-size:12.5px;color:#000;font-family:'Liberation Sans', sans-serif;line-height:20px;">30,000</div>
<div class="t" style="left:734.50px;top:317.67px;font-size:12.5px;color:#000;font-family:'Liberation Sans', sans-serif;line-height:20px;">600,000</div>
<div class="t" style="left:868.20px;top:317.67px;font-size:12.5px;color:#000;font-family:'Liberation Sans', sans-serif;line-height:20px;">0</div>
<div class="t" style="left:938.40px;top:317.67px;font-size:12.5px;color:#000;font-family:'Liberation Sans', sans-serif;line-height:20px;">600,000</div>
<div class="t" style="left:1042.60px;top:317.67px;font-size:12.5px;color:#000;font-family:'Liberation Sans', sans-serif;line-height:20px;">0</div>
<div class="t" style="left:1101.80px;top:317.67px;font-size:12.5px;color:#000;font-family:'Liberation Sans', sans-serif;line-height:20px;">0</div>
<div class="t" style="left:1182.40px;top:317.67px;font-size:12.5px;color:#000;font-family:'Liberation Sans', sans-serif;line-height:20px;">0</div>
<div class="t" style="left:116.90px;top:337.05px;font-size:14.67px;color:#000;font-family:'Liberation Serif', serif;line-height:20px;letter-spacing:-0.282px;">DEO002300297</div>
<div class="t" style="left:220.30px;top:337.05px;font-size:14.67px;color:#000;font-family:'Liberation Serif', serif;line-height:20px;letter-spacing:0.027px;">Trần Huyền Dương</div>
<div class="t" style="left:528.40px;top:337.67px;font-size:12.5px;color:#000;font-family:'Liberation Sans', sans-serif;line-height:20px;">760,000</div>
<div class="t" style="left:625.50px;top:337.67px;font-size:12.5px;color:#000;font-family:'Liberation Sans', sans-serif;line-height:20px;">20</div>
<div class="t" style="left:660.30px;top:337.67px;font-size:12.5px;color:#000;font-family:'Liberation Sans', sans-serif;line-height:20px;">30,000</div>
<div class="t" style="left:734.50px;top:337.67px;font-size:12.5px;color:#000;font-family:'Liberation Sans', sans-serif;line-height:20px;">600,000</div>
<div class="t" style="left:868.20px;top:337.67px;font-size:12.5px;color:#000;font-family:'Liberation Sans', sans-serif;line-height:20px;">0</div>
<div class="t" style="left:938.40px;top:337.67px;font-size:12.5px;color:#000;font-family:'Liberation Sans', sans-serif;line-height:20px;">600,000</div>
<div class="t" style="left:1042.60px;top:337.67px;font-size:12.5px;color:#000;font-family:'Liberation Sans', sans-serif;line-height:20px;">0</div>
<div class="t" style="left:1101.80px;top:337.67px;font-size:12.5px;color:#000;font-family:'Liberation Sans', sans-serif;line-height:20px;">0</div>
<div class="t" style="left:1182.40px;top:337.67px;font-size:12.5px;color:#000;font-family:'Liberation Sans', sans-serif;line-height:20px;">0</div>
<div class="t" style="left:116.90px;top:357.05px;font-size:14.67px;color:#000;font-family:'Liberation Serif', serif;line-height:20px;letter-spacing:-0.191px;">DEO002300298</div>
<div class="t" style="left:220.30px;top:357.05px;font-size:14.67px;color:#000;font-family:'Liberation Serif', serif;line-height:20px;letter-spacing:-0.213px;">Bùi Minh Hải Đăng</div>
<div class="t" style="left:528.40px;top:357.67px;font-size:12.5px;color:#000;font-family:'Liberation Sans', sans-serif;line-height:20px;">760,000</div>
<div class="t" style="left:625.50px;top:357.67px;font-size:12.5px;color:#000;font-family:'Liberation Sans', sans-serif;line-height:20px;">20</div>
<div class="t" style="left:660.30px;top:357.67px;font-size:12.5px;color:#000;font-family:'Liberation Sans', sans-serif;line-height:20px;">30,000</div>
<div class="t" style="left:734.50px;top:357.67px;font-size:12.5px;color:#000;font-family:'Liberation Sans', sans-serif;line-height:20px;">600,000</div>
<div class="t" style="left:868.20px;top:357.67px;font-size:12.5px;color:#000;font-family:'Liberation Sans', sans-serif;line-height:20px;">0</div>
<div class="t" style="left:938.40px;top:357.67px;font-size:12.5px;color:#000;font-family:'Liberation Sans', sans-serif;line-height:20px;">600,000</div>
<div class="t" style="left:1042.60px;top:357.67px;font-size:12.5px;color:#000;font-family:'Liberation Sans', sans-serif;line-height:20px;">0</div>
<div class="t" style="left:1101.80px;top:357.67px;font-size:12.5px;color:#000;font-family:'Liberation Sans', sans-serif;line-height:20px;">0</div>
<div class="t" style="left:1182.40px;top:357.67px;font-size:12.5px;color:#000;font-family:'Liberation Sans', sans-serif;line-height:20px;">0</div>
<div class="t" style="left:116.90px;top:377.05px;font-size:14.67px;color:#000;font-family:'Liberation Serif', serif;line-height:20px;letter-spacing:-0.191px;">DEO002300299</div>
<div class="t" style="left:220.30px;top:377.05px;font-size:14.67px;color:#000;font-family:'Liberation Serif', serif;line-height:20px;letter-spacing:0.069px;">Nguyễn Đức Hải</div>
<div class="t" style="left:528.40px;top:377.67px;font-size:12.5px;color:#000;font-family:'Liberation Sans', sans-serif;line-height:20px;">760,000</div>
<div class="t" style="left:625.50px;top:377.67px;font-size:12.5px;color:#000;font-family:'Liberation Sans', sans-serif;line-height:20px;">20</div>
<div class="t" style="left:660.30px;top:377.67px;font-size:12.5px;color:#000;font-family:'Liberation Sans', sans-serif;line-height:20px;">30,000</div>
<div class="t" style="left:734.50px;top:377.67px;font-size:12.5px;color:#000;font-family:'Liberation Sans', sans-serif;line-height:20px;">600,000</div>
<div class="t" style="left:868.20px;top:377.67px;font-size:12.5px;color:#000;font-family:'Liberation Sans', sans-serif;line-height:20px;">0</div>
<div class="t" style="left:938.40px;top:377.67px;font-size:12.5px;color:#000;font-family:'Liberation Sans', sans-serif;line-height:20px;">600,000</div>
<div class="t" style="left:1042.60px;top:377.67px;font-size:12.5px;color:#000;font-family:'Liberation Sans', sans-serif;line-height:20px;">0</div>
<div class="t" style="left:1101.80px;top:377.67px;font-size:12.5px;color:#000;font-family:'Liberation Sans', sans-serif;line-height:20px;">0</div>
<div class="t" style="left:1182.40px;top:377.67px;font-size:12.5px;color:#000;font-family:'Liberation Sans', sans-serif;line-height:20px;">0</div>
<div class="t" style="left:116.90px;top:397.05px;font-size:14.67px;color:#000;font-family:'Liberation Serif', serif;line-height:20px;letter-spacing:-0.191px;">DEO002300300</div>
<div class="t" style="left:220.30px;top:397.05px;font-size:14.67px;color:#000;font-family:'Liberation Serif', serif;line-height:20px;letter-spacing:0.012px;">Nguyễn Phương Hoa</div>
<div class="t" style="left:528.40px;top:397.67px;font-size:12.5px;color:#000;font-family:'Liberation Sans', sans-serif;line-height:20px;">750,000</div>
<div class="t" style="left:625.50px;top:397.67px;font-size:12.5px;color:#000;font-family:'Liberation Sans', sans-serif;line-height:20px;">20</div>
<div class="t" style="left:660.30px;top:397.67px;font-size:12.5px;color:#000;font-family:'Liberation Sans', sans-serif;line-height:20px;">30,000</div>
<div class="t" style="left:734.50px;top:397.67px;font-size:12.5px;color:#000;font-family:'Liberation Sans', sans-serif;line-height:20px;">600,000</div>
<div class="t" style="left:868.20px;top:397.67px;font-size:12.5px;color:#000;font-family:'Liberation Sans', sans-serif;line-height:20px;">0</div>
<div class="t" style="left:938.40px;top:397.67px;font-size:12.5px;color:#000;font-family:'Liberation Sans', sans-serif;line-height:20px;">600,000</div>
<div class="t" style="left:1042.60px;top:397.67px;font-size:12.5px;color:#000;font-family:'Liberation Sans', sans-serif;line-height:20px;">0</div>
<div class="t" style="left:1101.80px;top:397.67px;font-size:12.5px;color:#000;font-family:'Liberation Sans', sans-serif;line-height:20px;">0</div>
<div class="t" style="left:1182.40px;top:397.67px;font-size:12.5px;color:#000;font-family:'Liberation Sans', sans-serif;line-height:20px;">0</div>
<div class="t" style="left:116.90px;top:417.05px;font-size:14.67px;color:#000;font-family:'Liberation Serif', serif;line-height:20px;letter-spacing:-0.191px;">DEO002300301</div>
<div class="t" style="left:220.30px;top:417.05px;font-size:14.67px;color:#000;font-family:'Liberation Serif', serif;line-height:20px;letter-spacing:0.035px;">Hoàng Phú Nam Hưng</div>
<div class="t" style="left:528.40px;top:417.67px;font-size:12.5px;color:#000;font-family:'Liberation Sans', sans-serif;line-height:20px;">755,000</div>
<div class="t" style="left:625.50px;top:417.67px;font-size:12.5px;color:#000;font-family:'Liberation Sans', sans-serif;line-height:20px;">20</div>
<div class="t" style="left:660.30px;top:417.67px;font-size:12.5px;color:#000;font-family:'Liberation Sans', sans-serif;line-height:20px;">30,000</div>
<div class="t" style="left:734.50px;top:417.67px;font-size:12.5px;color:#000;font-family:'Liberation Sans', sans-serif;line-height:20px;">600,000</div>
<div class="t" style="left:868.20px;top:417.67px;font-size:12.5px;color:#000;font-family:'Liberation Sans', sans-serif;line-height:20px;">0</div>
<div class="t" style="left:938.40px;top:417.67px;font-size:12.5px;color:#000;font-family:'Liberation Sans', sans-serif;line-height:20px;">600,000</div>
<div class="t" style="left:1042.60px;top:417.67px;font-size:12.5px;color:#000;font-family:'Liberation Sans', sans-serif;line-height:20px;">0</div>
<div class="t" style="left:1101.80px;top:417.67px;font-size:12.5px;color:#000;font-family:'Liberation Sans', sans-serif;line-height:20px;">0</div>
<div class="t" style="left:1182.40px;top:417.67px;font-size:12.5px;color:#000;font-family:'Liberation Sans', sans-serif;line-height:20px;">0</div>
<div class="t" style="left:116.90px;top:437.05px;font-size:14.67px;color:#000;font-family:'Liberation Serif', serif;line-height:20px;letter-spacing:-0.191px;">DEO002300302</div>
<div class="t" style="left:220.30px;top:437.05px;font-size:14.67px;color:#000;font-family:'Liberation Serif', serif;line-height:20px;letter-spacing:-0.027px;">Vũ Đức Song Hưng</div>
<div class="t" style="left:528.40px;top:437.67px;font-size:12.5px;color:#000;font-family:'Liberation Sans', sans-serif;line-height:20px;">760,000</div>
<div class="t" style="left:625.50px;top:437.67px;font-size:12.5px;color:#000;font-family:'Liberation Sans', sans-serif;line-height:20px;">20</div>
<div class="t" style="left:660.30px;top:437.67px;font-size:12.5px;color:#000;font-family:'Liberation Sans', sans-serif;line-height:20px;">30,000</div>
<div class="t" style="left:734.50px;top:437.67px;font-size:12.5px;color:#000;font-family:'Liberation Sans', sans-serif;line-height:20px;">600,000</div>
<div class="t" style="left:868.20px;top:437.67px;font-size:12.5px;color:#000;font-family:'Liberation Sans', sans-serif;line-height:20px;">0</div>
<div class="t" style="left:938.40px;top:437.67px;font-size:12.5px;color:#000;font-family:'Liberation Sans', sans-serif;line-height:20px;">600,000</div>
<div class="t" style="left:1042.60px;top:437.67px;font-size:12.5px;color:#000;font-family:'Liberation Sans', sans-serif;line-height:20px;">0</div>
<div class="t" style="left:1101.80px;top:437.67px;font-size:12.5px;color:#000;font-family:'Liberation Sans', sans-serif;line-height:20px;">0</div>
<div class="t" style="left:1182.40px;top:437.67px;font-size:12.5px;color:#000;font-family:'Liberation Sans', sans-serif;line-height:20px;">0</div>
<div class="t" style="left:116.90px;top:457.05px;font-size:14.67px;color:#000;font-family:'Liberation Serif', serif;line-height:20px;letter-spacing:-0.191px;">DEO002300303</div>
<div class="t" style="left:220.30px;top:457.05px;font-size:14.67px;color:#000;font-family:'Liberation Serif', serif;line-height:20px;letter-spacing:-0.006px;">Nguyễn Ngọc Khánh</div>
<div class="t" style="left:528.40px;top:457.67px;font-size:12.5px;color:#000;font-family:'Liberation Sans', sans-serif;line-height:20px;">760,000</div>
<div class="t" style="left:625.50px;top:457.67px;font-size:12.5px;color:#000;font-family:'Liberation Sans', sans-serif;line-height:20px;">20</div>
<div class="t" style="left:660.30px;top:457.67px;font-size:12.5px;color:#000;font-family:'Liberation Sans', sans-serif;line-height:20px;">30,000</div>
<div class="t" style="left:734.50px;top:457.67px;font-size:12.5px;color:#000;font-family:'Liberation Sans', sans-serif;line-height:20px;">600,000</div>
<div class="t" style="left:868.20px;top:457.67px;font-size:12.5px;color:#000;font-family:'Liberation Sans', sans-serif;line-height:20px;">0</div>
<div class="t" style="left:938.40px;top:457.67px;font-size:12.5px;color:#000;font-family:'Liberation Sans', sans-serif;line-height:20px;">600,000</div>
<div class="t" style="left:1042.60px;top:457.67px;font-size:12.5px;color:#000;font-family:'Liberation Sans', sans-serif;line-height:20px;">0</div>
<div class="t" style="left:1101.80px;top:457.67px;font-size:12.5px;color:#000;font-family:'Liberation Sans', sans-serif;line-height:20px;">0</div>
<div class="t" style="left:1182.40px;top:457.67px;font-size:12.5px;color:#000;font-family:'Liberation Sans', sans-serif;line-height:20px;">0</div>
<div class="t" style="left:116.90px;top:477.05px;font-size:14.67px;color:#000;font-family:'Liberation Serif', serif;line-height:20px;letter-spacing:-0.282px;">DEO002300304</div>
<div class="t" style="left:220.30px;top:477.05px;font-size:14.67px;color:#000;font-family:'Liberation Serif', serif;line-height:20px;letter-spacing:0.009px;">Vũ Đăng Khoa</div>
<div class="t" style="left:528.40px;top:477.67px;font-size:12.5px;color:#000;font-family:'Liberation Sans', sans-serif;line-height:20px;">755,000</div>
<div class="t" style="left:625.50px;top:477.67px;font-size:12.5px;color:#000;font-family:'Liberation Sans', sans-serif;line-height:20px;">20</div>
<div class="t" style="left:660.30px;top:477.67px;font-size:12.5px;color:#000;font-family:'Liberation Sans', sans-serif;line-height:20px;">30,000</div>
<div class="t" style="left:734.50px;top:477.67px;font-size:12.5px;color:#000;font-family:'Liberation Sans', sans-serif;line-height:20px;">600,000</div>
<div class="t" style="left:868.20px;top:477.67px;font-size:12.5px;color:#000;font-family:'Liberation Sans', sans-serif;line-height:20px;">0</div>
<div class="t" style="left:938.40px;top:477.67px;font-size:12.5px;color:#000;font-family:'Liberation Sans', sans-serif;line-height:20px;">600,000</div>
<div class="t" style="left:1042.60px;top:477.67px;font-size:12.5px;color:#000;font-family:'Liberation Sans', sans-serif;line-height:20px;">0</div>
<div class="t" style="left:1101.80px;top:477.67px;font-size:12.5px;color:#000;font-family:'Liberation Sans', sans-serif;line-height:20px;">0</div>
<div class="t" style="left:1182.40px;top:477.67px;font-size:12.5px;color:#000;font-family:'Liberation Sans', sans-serif;line-height:20px;">0</div>
<div class="t" style="left:116.90px;top:497.05px;font-size:14.67px;color:#000;font-family:'Liberation Serif', serif;line-height:20px;letter-spacing:-0.191px;">DEO002300305</div>
<div class="t" style="left:220.30px;top:497.05px;font-size:14.67px;color:#000;font-family:'Liberation Serif', serif;line-height:20px;letter-spacing:-0.300px;">Bùi Minh Khuê</div>
<div class="t" style="left:528.40px;top:497.67px;font-size:12.5px;color:#000;font-family:'Liberation Sans', sans-serif;line-height:20px;">750,000</div>
<div class="t" style="left:625.50px;top:497.67px;font-size:12.5px;color:#000;font-family:'Liberation Sans', sans-serif;line-height:20px;">20</div>
<div class="t" style="left:660.30px;top:497.67px;font-size:12.5px;color:#000;font-family:'Liberation Sans', sans-serif;line-height:20px;">30,000</div>
<div class="t" style="left:734.50px;top:497.67px;font-size:12.5px;color:#000;font-family:'Liberation Sans', sans-serif;line-height:20px;">600,000</div>
<div class="t" style="left:868.20px;top:497.67px;font-size:12.5px;color:#000;font-family:'Liberation Sans', sans-serif;line-height:20px;">0</div>
<div class="t" style="left:938.40px;top:497.67px;font-size:12.5px;color:#000;font-family:'Liberation Sans', sans-serif;line-height:20px;">600,000</div>
<div class="t" style="left:1042.60px;top:497.67px;font-size:12.5px;color:#000;font-family:'Liberation Sans', sans-serif;line-height:20px;">0</div>
<div class="t" style="left:1101.80px;top:497.67px;font-size:12.5px;color:#000;font-family:'Liberation Sans', sans-serif;line-height:20px;">0</div>
<div class="t" style="left:1182.40px;top:497.67px;font-size:12.5px;color:#000;font-family:'Liberation Sans', sans-serif;line-height:20px;">0</div>
<div class="t" style="left:116.90px;top:517.05px;font-size:14.67px;color:#000;font-family:'Liberation Serif', serif;line-height:20px;letter-spacing:-0.282px;">DEO002300306</div>
<div class="t" style="left:220.30px;top:517.05px;font-size:14.67px;color:#000;font-family:'Liberation Serif', serif;line-height:20px;letter-spacing:-0.121px;">Phạm Thị Phương Linh</div>
<div class="t" style="left:528.40px;top:517.67px;font-size:12.5px;color:#000;font-family:'Liberation Sans', sans-serif;line-height:20px;">760,000</div>
<div class="t" style="left:625.50px;top:517.67px;font-size:12.5px;color:#000;font-family:'Liberation Sans', sans-serif;line-height:20px;">20</div>
<div class="t" style="left:660.30px;top:517.67px;font-size:12.5px;color:#000;font-family:'Liberation Sans', sans-serif;line-height:20px;">30,000</div>
<div class="t" style="left:734.50px;top:517.67px;font-size:12.5px;color:#000;font-family:'Liberation Sans', sans-serif;line-height:20px;">600,000</div>
<div class="t" style="left:868.20px;top:517.67px;font-size:12.5px;color:#000;font-family:'Liberation Sans', sans-serif;line-height:20px;">0</div>
<div class="t" style="left:938.40px;top:517.67px;font-size:12.5px;color:#000;font-family:'Liberation Sans', sans-serif;line-height:20px;">600,000</div>
<div class="t" style="left:1042.60px;top:517.67px;font-size:12.5px;color:#000;font-family:'Liberation Sans', sans-serif;line-height:20px;">0</div>
<div class="t" style="left:1101.80px;top:517.67px;font-size:12.5px;color:#000;font-family:'Liberation Sans', sans-serif;line-height:20px;">0</div>
<div class="t" style="left:1182.40px;top:517.67px;font-size:12.5px;color:#000;font-family:'Liberation Sans', sans-serif;line-height:20px;">0</div>
<div class="t" style="left:116.90px;top:537.05px;font-size:14.67px;color:#000;font-family:'Liberation Serif', serif;line-height:20px;letter-spacing:-0.282px;">DEO002300307</div>
<div class="t" style="left:220.30px;top:537.05px;font-size:14.67px;color:#000;font-family:'Liberation Serif', serif;line-height:20px;">Phạm Bảo Lộc</div>
<div class="t" style="left:528.40px;top:537.67px;font-size:12.5px;color:#000;font-family:'Liberation Sans', sans-serif;line-height:20px;">760,000</div>
<div class="t" style="left:625.50px;top:537.67px;font-size:12.5px;color:#000;font-family:'Liberation Sans', sans-serif;line-height:20px;">20</div>
<div class="t" style="left:660.30px;top:537.67px;font-size:12.5px;color:#000;font-family:'Liberation Sans', sans-serif;line-height:20px;">30,000</div>
<div class="t" style="left:734.50px;top:537.67px;font-size:12.5px;color:#000;font-family:'Liberation Sans', sans-serif;line-height:20px;">600,000</div>
<div class="t" style="left:868.20px;top:537.67px;font-size:12.5px;color:#000;font-family:'Liberation Sans', sans-serif;line-height:20px;">0</div>
<div class="t" style="left:938.40px;top:537.67px;font-size:12.5px;color:#000;font-family:'Liberation Sans', sans-serif;line-height:20px;">600,000</div>
<div class="t" style="left:1042.60px;top:537.67px;font-size:12.5px;color:#000;font-family:'Liberation Sans', sans-serif;line-height:20px;">0</div>
<div class="t" style="left:1101.80px;top:537.67px;font-size:12.5px;color:#000;font-family:'Liberation Sans', sans-serif;line-height:20px;">0</div>
<div class="t" style="left:1182.40px;top:537.67px;font-size:12.5px;color:#000;font-family:'Liberation Sans', sans-serif;line-height:20px;">0</div>
<div class="t" style="left:116.90px;top:557.05px;font-size:14.67px;color:#000;font-family:'Liberation Serif', serif;line-height:20px;letter-spacing:-0.191px;">DEO002300308</div>
<div class="t" style="left:220.30px;top:557.05px;font-size:14.67px;color:#000;font-family:'Liberation Serif', serif;line-height:20px;letter-spacing:-0.162px;">Phạm Hiếu Minh</div>
<div class="t" style="left:528.40px;top:557.67px;font-size:12.5px;color:#000;font-family:'Liberation Sans', sans-serif;line-height:20px;">760,000</div>
<div class="t" style="left:625.50px;top:557.67px;font-size:12.5px;color:#000;font-family:'Liberation Sans', sans-serif;line-height:20px;">20</div>
<div class="t" style="left:660.30px;top:557.67px;font-size:12.5px;color:#000;font-family:'Liberation Sans', sans-serif;line-height:20px;">30,000</div>
<div class="t" style="left:734.50px;top:557.67px;font-size:12.5px;color:#000;font-family:'Liberation Sans', sans-serif;line-height:20px;">600,000</div>
<div class="t" style="left:868.20px;top:557.67px;font-size:12.5px;color:#000;font-family:'Liberation Sans', sans-serif;line-height:20px;">0</div>
<div class="t" style="left:938.40px;top:557.67px;font-size:12.5px;color:#000;font-family:'Liberation Sans', sans-serif;line-height:20px;">600,000</div>
<div class="t" style="left:1042.60px;top:557.67px;font-size:12.5px;color:#000;font-family:'Liberation Sans', sans-serif;line-height:20px;">0</div>
<div class="t" style="left:1101.80px;top:557.67px;font-size:12.5px;color:#000;font-family:'Liberation Sans', sans-serif;line-height:20px;">0</div>
<div class="t" style="left:1182.40px;top:557.67px;font-size:12.5px;color:#000;font-family:'Liberation Sans', sans-serif;line-height:20px;">0</div>
<div class="t" style="left:116.90px;top:577.05px;font-size:14.67px;color:#000;font-family:'Liberation Serif', serif;line-height:20px;letter-spacing:-0.191px;">DEO002300309</div>
<div class="t" style="left:220.30px;top:577.05px;font-size:14.67px;color:#000;font-family:'Liberation Serif', serif;line-height:20px;letter-spacing:-0.114px;">Nguyễn Huyền My</div>
<div class="t" style="left:528.40px;top:577.67px;font-size:12.5px;color:#000;font-family:'Liberation Sans', sans-serif;line-height:20px;">760,000</div>
<div class="t" style="left:625.50px;top:577.67px;font-size:12.5px;color:#000;font-family:'Liberation Sans', sans-serif;line-height:20px;">20</div>
<div class="t" style="left:660.30px;top:577.67px;font-size:12.5px;color:#000;font-family:'Liberation Sans', sans-serif;line-height:20px;">30,000</div>
<div class="t" style="left:734.50px;top:577.67px;font-size:12.5px;color:#000;font-family:'Liberation Sans', sans-serif;line-height:20px;">600,000</div>
<div class="t" style="left:868.20px;top:577.67px;font-size:12.5px;color:#000;font-family:'Liberation Sans', sans-serif;line-height:20px;">0</div>
<div class="t" style="left:938.40px;top:577.67px;font-size:12.5px;color:#000;font-family:'Liberation Sans', sans-serif;line-height:20px;">600,000</div>
<div class="t" style="left:1042.60px;top:577.67px;font-size:12.5px;color:#000;font-family:'Liberation Sans', sans-serif;line-height:20px;">0</div>
<div class="t" style="left:1101.80px;top:577.67px;font-size:12.5px;color:#000;font-family:'Liberation Sans', sans-serif;line-height:20px;">0</div>
<div class="t" style="left:1182.40px;top:577.67px;font-size:12.5px;color:#000;font-family:'Liberation Sans', sans-serif;line-height:20px;">0</div>
<div class="t" style="left:116.90px;top:597.05px;font-size:14.67px;color:#000;font-family:'Liberation Serif', serif;line-height:20px;letter-spacing:-0.191px;">DEO002300310</div>
<div class="t" style="left:220.30px;top:597.05px;font-size:14.67px;color:#000;font-family:'Liberation Serif', serif;line-height:20px;letter-spacing:-0.192px;">Nguyễn Xuân Mỹ</div>
<div class="t" style="left:528.40px;top:597.67px;font-size:12.5px;color:#000;font-family:'Liberation Sans', sans-serif;line-height:20px;">760,000</div>
<div class="t" style="left:625.50px;top:597.67px;font-size:12.5px;color:#000;font-family:'Liberation Sans', sans-serif;line-height:20px;">20</div>
<div class="t" style="left:660.30px;top:597.67px;font-size:12.5px;color:#000;font-family:'Liberation Sans', sans-serif;line-height:20px;">30,000</div>
<div class="t" style="left:734.50px;top:597.67px;font-size:12.5px;color:#000;font-family:'Liberation Sans', sans-serif;line-height:20px;">600,000</div>
<div class="t" style="left:868.20px;top:597.67px;font-size:12.5px;color:#000;font-family:'Liberation Sans', sans-serif;line-height:20px;">0</div>
<div class="t" style="left:938.40px;top:597.67px;font-size:12.5px;color:#000;font-family:'Liberation Sans', sans-serif;line-height:20px;">600,000</div>
<div class="t" style="left:1042.60px;top:597.67px;font-size:12.5px;color:#000;font-family:'Liberation Sans', sans-serif;line-height:20px;">0</div>
<div class="t" style="left:1101.80px;top:597.67px;font-size:12.5px;color:#000;font-family:'Liberation Sans', sans-serif;line-height:20px;">0</div>
<div class="t" style="left:1182.40px;top:597.67px;font-size:12.5px;color:#000;font-family:'Liberation Sans', sans-serif;line-height:20px;">0</div>
<div class="t" style="left:116.90px;top:617.05px;font-size:14.67px;color:#000;font-family:'Liberation Serif', serif;line-height:20px;letter-spacing:-0.191px;">DEO002300311</div>
<div class="t" style="left:220.30px;top:617.05px;font-size:14.67px;color:#000;font-family:'Liberation Serif', serif;line-height:20px;letter-spacing:0.145px;">Phạm Bảo Nam</div>
<div class="t" style="left:528.40px;top:617.67px;font-size:12.5px;color:#000;font-family:'Liberation Sans', sans-serif;line-height:20px;">760,000</div>
<div class="t" style="left:625.50px;top:617.67px;font-size:12.5px;color:#000;font-family:'Liberation Sans', sans-serif;line-height:20px;">20</div>
<div class="t" style="left:660.30px;top:617.67px;font-size:12.5px;color:#000;font-family:'Liberation Sans', sans-serif;line-height:20px;">30,000</div>
<div class="t" style="left:734.50px;top:617.67px;font-size:12.5px;color:#000;font-family:'Liberation Sans', sans-serif;line-height:20px;">600,000</div>
<div class="t" style="left:868.20px;top:617.67px;font-size:12.5px;color:#000;font-family:'Liberation Sans', sans-serif;line-height:20px;">0</div>
<div class="t" style="left:938.40px;top:617.67px;font-size:12.5px;color:#000;font-family:'Liberation Sans', sans-serif;line-height:20px;">600,000</div>
<div class="t" style="left:1042.60px;top:617.67px;font-size:12.5px;color:#000;font-family:'Liberation Sans', sans-serif;line-height:20px;">0</div>
<div class="t" style="left:1101.80px;top:617.67px;font-size:12.5px;color:#000;font-family:'Liberation Sans', sans-serif;line-height:20px;">0</div>
<div class="t" style="left:1182.40px;top:617.67px;font-size:12.5px;color:#000;font-family:'Liberation Sans', sans-serif;line-height:20px;">0</div>
<div class="t" style="left:116.90px;top:637.05px;font-size:14.67px;color:#000;font-family:'Liberation Serif', serif;line-height:20px;letter-spacing:-0.191px;">DEO002300312</div>
<div class="t" style="left:220.30px;top:637.05px;font-size:14.67px;color:#000;font-family:'Liberation Serif', serif;line-height:20px;letter-spacing:-0.020px;">Tạ Bảo Ngọc</div>
<div class="t" style="left:528.40px;top:637.67px;font-size:12.5px;color:#000;font-family:'Liberation Sans', sans-serif;line-height:20px;">760,000</div>
<div class="t" style="left:625.50px;top:637.67px;font-size:12.5px;color:#000;font-family:'Liberation Sans', sans-serif;line-height:20px;">20</div>
<div class="t" style="left:660.30px;top:637.67px;font-size:12.5px;color:#000;font-family:'Liberation Sans', sans-serif;line-height:20px;">30,000</div>
<div class="t" style="left:734.50px;top:637.67px;font-size:12.5px;color:#000;font-family:'Liberation Sans', sans-serif;line-height:20px;">600,000</div>
<div class="t" style="left:868.20px;top:637.67px;font-size:12.5px;color:#000;font-family:'Liberation Sans', sans-serif;line-height:20px;">0</div>
<div class="t" style="left:938.40px;top:637.67px;font-size:12.5px;color:#000;font-family:'Liberation Sans', sans-serif;line-height:20px;">600,000</div>
<div class="t" style="left:1042.60px;top:637.67px;font-size:12.5px;color:#000;font-family:'Liberation Sans', sans-serif;line-height:20px;">0</div>
<div class="t" style="left:1101.80px;top:637.67px;font-size:12.5px;color:#000;font-family:'Liberation Sans', sans-serif;line-height:20px;">0</div>
<div class="t" style="left:1182.40px;top:637.67px;font-size:12.5px;color:#000;font-family:'Liberation Sans', sans-serif;line-height:20px;">0</div>
<div class="t" style="left:116.90px;top:657.05px;font-size:14.67px;color:#000;font-family:'Liberation Serif', serif;line-height:20px;letter-spacing:-0.191px;">DEO002300313</div>
<div class="t" style="left:220.30px;top:657.05px;font-size:14.67px;color:#000;font-family:'Liberation Serif', serif;line-height:20px;letter-spacing:0.067px;">Lê Bảo Thư</div>
<div class="t" style="left:528.40px;top:657.67px;font-size:12.5px;color:#000;font-family:'Liberation Sans', sans-serif;line-height:20px;">760,000</div>
<div class="t" style="left:625.50px;top:657.67px;font-size:12.5px;color:#000;font-family:'Liberation Sans', sans-serif;line-height:20px;">20</div>
<div class="t" style="left:660.30px;top:657.67px;font-size:12.5px;color:#000;font-family:'Liberation Sans', sans-serif;line-height:20px;">30,000</div>
<div class="t" style="left:734.50px;top:657.67px;font-size:12.5px;color:#000;font-family:'Liberation Sans', sans-serif;line-height:20px;">600,000</div>
<div class="t" style="left:868.20px;top:657.67px;font-size:12.5px;color:#000;font-family:'Liberation Sans', sans-serif;line-height:20px;">0</div>
<div class="t" style="left:938.40px;top:657.67px;font-size:12.5px;color:#000;font-family:'Liberation Sans', sans-serif;line-height:20px;">600,000</div>
<div class="t" style="left:1042.60px;top:657.67px;font-size:12.5px;color:#000;font-family:'Liberation Sans', sans-serif;line-height:20px;">0</div>
<div class="t" style="left:1101.80px;top:657.67px;font-size:12.5px;color:#000;font-family:'Liberation Sans', sans-serif;line-height:20px;">0</div>
<div class="t" style="left:1182.40px;top:657.67px;font-size:12.5px;color:#000;font-family:'Liberation Sans', sans-serif;line-height:20px;">0</div>
<div class="t" style="left:116.90px;top:677.05px;font-size:14.67px;color:#000;font-family:'Liberation Serif', serif;line-height:20px;letter-spacing:-0.282px;">DEO002300314</div>
<div class="t" style="left:220.30px;top:677.05px;font-size:14.67px;color:#000;font-family:'Liberation Serif', serif;line-height:20px;letter-spacing:-0.108px;">Vũ Minh Trang</div>
<div class="t" style="left:528.40px;top:677.67px;font-size:12.5px;color:#000;font-family:'Liberation Sans', sans-serif;line-height:20px;">760,000</div>
<div class="t" style="left:625.50px;top:677.67px;font-size:12.5px;color:#000;font-family:'Liberation Sans', sans-serif;line-height:20px;">20</div>
<div class="t" style="left:660.30px;top:677.67px;font-size:12.5px;color:#000;font-family:'Liberation Sans', sans-serif;line-height:20px;">30,000</div>
<div class="t" style="left:734.50px;top:677.67px;font-size:12.5px;color:#000;font-family:'Liberation Sans', sans-serif;line-height:20px;">600,000</div>
<div class="t" style="left:868.20px;top:677.67px;font-size:12.5px;color:#000;font-family:'Liberation Sans', sans-serif;line-height:20px;">0</div>
<div class="t" style="left:938.40px;top:677.67px;font-size:12.5px;color:#000;font-family:'Liberation Sans', sans-serif;line-height:20px;">600,000</div>
<div class="t" style="left:1042.60px;top:677.67px;font-size:12.5px;color:#000;font-family:'Liberation Sans', sans-serif;line-height:20px;">0</div>
<div class="t" style="left:1101.80px;top:677.67px;font-size:12.5px;color:#000;font-family:'Liberation Sans', sans-serif;line-height:20px;">0</div>
<div class="t" style="left:1182.40px;top:677.67px;font-size:12.5px;color:#000;font-family:'Liberation Sans', sans-serif;line-height:20px;">0</div>
<div class="t" style="left:116.90px;top:697.05px;font-size:14.67px;color:#000;font-family:'Liberation Serif', serif;line-height:20px;letter-spacing:-0.191px;">DEO002300315</div>
<div class="t" style="left:220.30px;top:697.05px;font-size:14.67px;color:#000;font-family:'Liberation Serif', serif;line-height:20px;letter-spacing:-0.040px;">Nguyễn Xuân Trúc</div>
<div class="t" style="left:528.40px;top:697.67px;font-size:12.5px;color:#000;font-family:'Liberation Sans', sans-serif;line-height:20px;">760,000</div>
<div class="t" style="left:625.50px;top:697.67px;font-size:12.5px;color:#000;font-family:'Liberation Sans', sans-serif;line-height:20px;">20</div>
<div class="t" style="left:660.30px;top:697.67px;font-size:12.5px;color:#000;font-family:'Liberation Sans', sans-serif;line-height:20px;">30,000</div>
<div class="t" style="left:734.50px;top:697.67px;font-size:12.5px;color:#000;font-family:'Liberation Sans', sans-serif;line-height:20px;">600,000</div>
<div class="t" style="left:868.20px;top:697.67px;font-size:12.5px;color:#000;font-family:'Liberation Sans', sans-serif;line-height:20px;">0</div>
<div class="t" style="left:938.40px;top:697.67px;font-size:12.5px;color:#000;font-family:'Liberation Sans', sans-serif;line-height:20px;">600,000</div>
<div class="t" style="left:1042.60px;top:697.67px;font-size:12.5px;color:#000;font-family:'Liberation Sans', sans-serif;line-height:20px;">0</div>
<div class="t" style="left:1101.80px;top:697.67px;font-size:12.5px;color:#000;font-family:'Liberation Sans', sans-serif;line-height:20px;">0</div>
<div class="t" style="left:1182.40px;top:697.67px;font-size:12.5px;color:#000;font-family:'Liberation Sans', sans-serif;line-height:20px;">0</div>
<div class="t" style="left:116.90px;top:717.05px;font-size:14.67px;color:#000;font-family:'Liberation Serif', serif;line-height:20px;letter-spacing:-0.282px;">DEO002300316</div>
<div class="t" style="left:220.30px;top:717.05px;font-size:14.67px;color:#000;font-family:'Liberation Serif', serif;line-height:20px;letter-spacing:-0.094px;">Nguyễn Quang Tùng</div>
<div class="t" style="left:528.40px;top:717.67px;font-size:12.5px;color:#000;font-family:'Liberation Sans', sans-serif;line-height:20px;">760,000</div>
<div class="t" style="left:625.50px;top:717.67px;font-size:12.5px;color:#000;font-family:'Liberation Sans', sans-serif;line-height:20px;">20</div>
<div class="t" style="left:660.30px;top:717.67px;font-size:12.5px;color:#000;font-family:'Liberation Sans', sans-serif;line-height:20px;">30,000</div>
<div class="t" style="left:734.50px;top:717.67px;font-size:12.5px;color:#000;font-family:'Liberation Sans', sans-serif;line-height:20px;">600,000</div>
<div class="t" style="left:868.20px;top:717.67px;font-size:12.5px;color:#000;font-family:'Liberation Sans', sans-serif;line-height:20px;">0</div>
<div class="t" style="left:938.40px;top:717.67px;font-size:12.5px;color:#000;font-family:'Liberation Sans', sans-serif;line-height:20px;">600,000</div>
<div class="t" style="left:1042.60px;top:717.67px;font-size:12.5px;color:#000;font-family:'Liberation Sans', sans-serif;line-height:20px;">0</div>
<div class="t" style="left:1101.80px;top:717.67px;font-size:12.5px;color:#000;font-family:'Liberation Sans', sans-serif;line-height:20px;">0</div>
<div class="t" style="left:1182.40px;top:717.67px;font-size:12.5px;color:#000;font-family:'Liberation Sans', sans-serif;line-height:20px;">0</div>
<div class="t" style="left:116.90px;top:737.05px;font-size:14.67px;color:#000;font-family:'Liberation Serif', serif;line-height:20px;letter-spacing:-0.282px;">DEO002300317</div>
<div class="t" style="left:220.30px;top:737.05px;font-size:14.67px;color:#000;font-family:'Liberation Serif', serif;line-height:20px;letter-spacing:-0.021px;">Nguyễn Khánh Vũ</div>
<div class="t" style="left:528.40px;top:737.67px;font-size:12.5px;color:#000;font-family:'Liberation Sans', sans-serif;line-height:20px;">760,000</div>
<div class="t" style="left:625.50px;top:737.67px;font-size:12.5px;color:#000;font-family:'Liberation Sans', sans-serif;line-height:20px;">20</div>
<div class="t" style="left:660.30px;top:737.67px;font-size:12.5px;color:#000;font-family:'Liberation Sans', sans-serif;line-height:20px;">30,000</div>
<div class="t" style="left:734.50px;top:737.67px;font-size:12.5px;color:#000;font-family:'Liberation Sans', sans-serif;line-height:20px;">600,000</div>
<div class="t" style="left:868.20px;top:737.67px;font-size:12.5px;color:#000;font-family:'Liberation Sans', sans-serif;line-height:20px;">0</div>
<div class="t" style="left:938.40px;top:737.67px;font-size:12.5px;color:#000;font-family:'Liberation Sans', sans-serif;line-height:20px;">600,000</div>
<div class="t" style="left:1042.60px;top:737.67px;font-size:12.5px;color:#000;font-family:'Liberation Sans', sans-serif;line-height:20px;">0</div>
<div class="t" style="left:1101.80px;top:737.67px;font-size:12.5px;color:#000;font-family:'Liberation Sans', sans-serif;line-height:20px;">0</div>
<div class="t" style="left:1182.40px;top:737.67px;font-size:12.5px;color:#000;font-family:'Liberation Sans', sans-serif;line-height:20px;">0</div>
<div class="t" style="left:116.90px;top:757.05px;font-size:14.67px;color:#000;font-family:'Liberation Serif', serif;line-height:20px;letter-spacing:-0.191px;">DEO002300318</div>
<div class="t" style="left:220.30px;top:757.05px;font-size:14.67px;color:#000;font-family:'Liberation Serif', serif;line-height:20px;letter-spacing:0.171px;">Lê Hoàng Bảo Vy</div>
<div class="t" style="left:528.40px;top:757.67px;font-size:12.5px;color:#000;font-family:'Liberation Sans', sans-serif;line-height:20px;">760,000</div>
<div class="t" style="left:625.50px;top:757.67px;font-size:12.5px;color:#000;font-family:'Liberation Sans', sans-serif;line-height:20px;">20</div>
<div class="t" style="left:660.30px;top:757.67px;font-size:12.5px;color:#000;font-family:'Liberation Sans', sans-serif;line-height:20px;">30,000</div>
<div class="t" style="left:734.50px;top:757.67px;font-size:12.5px;color:#000;font-family:'Liberation Sans', sans-serif;line-height:20px;">600,000</div>
<div class="t" style="left:868.20px;top:757.67px;font-size:12.5px;color:#000;font-family:'Liberation Sans', sans-serif;line-height:20px;">0</div>
<div class="t" style="left:938.40px;top:757.67px;font-size:12.5px;color:#000;font-family:'Liberation Sans', sans-serif;line-height:20px;">600,000</div>
<div class="t" style="left:1042.60px;top:757.67px;font-size:12.5px;color:#000;font-family:'Liberation Sans', sans-serif;line-height:20px;">0</div>
<div class="t" style="left:1101.80px;top:757.67px;font-size:12.5px;color:#000;font-family:'Liberation Sans', sans-serif;line-height:20px;">0</div>
<div class="t" style="left:1182.40px;top:757.67px;font-size:12.5px;color:#000;font-family:'Liberation Sans', sans-serif;line-height:20px;">0</div>
<div class="t" style="left:116.90px;top:777.05px;font-size:14.67px;color:#000;font-family:'Liberation Serif', serif;line-height:20px;letter-spacing:-0.191px;">DEO002300319</div>
<div class="t" style="left:220.30px;top:777.05px;font-size:14.67px;color:#000;font-family:'Liberation Serif', serif;line-height:20px;letter-spacing:0.132px;">Phạm Hoàng Phương Vy</div>
<div class="t" style="left:528.40px;top:777.67px;font-size:12.5px;color:#000;font-family:'Liberation Sans', sans-serif;line-height:20px;">760,000</div>
<div class="t" style="left:625.50px;top:777.67px;font-size:12.5px;color:#000;font-family:'Liberation Sans', sans-serif;line-height:20px;">20</div>
<div class="t" style="left:660.30px;top:777.67px;font-size:12.5px;color:#000;font-family:'Liberation Sans', sans-serif;line-height:20px;">30,000</div>
<div class="t" style="left:734.50px;top:777.67px;font-size:12.5px;color:#000;font-family:'Liberation Sans', sans-serif;line-height:20px;">600,000</div>
<div class="t" style="left:868.20px;top:777.67px;font-size:12.5px;color:#000;font-family:'Liberation Sans', sans-serif;line-height:20px;">0</div>
<div class="t" style="left:938.40px;top:777.67px;font-size:12.5px;color:#000;font-family:'Liberation Sans', sans-serif;line-height:20px;">600,000</div>
<div class="t" style="left:1042.60px;top:777.67px;font-size:12.5px;color:#000;font-family:'Liberation Sans', sans-serif;line-height:20px;">0</div>
<div class="t" style="left:1101.80px;top:777.67px;font-size:12.5px;color:#000;font-family:'Liberation Sans', sans-serif;line-height:20px;">0</div>
<div class="t" style="left:1182.40px;top:777.67px;font-size:12.5px;color:#000;font-family:'Liberation Sans', sans-serif;line-height:20px;">0</div>
<div class="t" style="left:116.90px;top:797.05px;font-size:14.67px;color:#000;font-family:'Liberation Serif', serif;line-height:20px;letter-spacing:-0.191px;">DEO002300320</div>
<div class="t" style="left:220.30px;top:797.05px;font-size:14.67px;color:#000;font-family:'Liberation Serif', serif;line-height:20px;letter-spacing:-0.069px;">Nguyễn Phương Nhi</div>
<div class="t" style="left:528.40px;top:797.67px;font-size:12.5px;color:#000;font-family:'Liberation Sans', sans-serif;line-height:20px;">760,000</div>
<div class="t" style="left:625.50px;top:797.67px;font-size:12.5px;color:#000;font-family:'Liberation Sans', sans-serif;line-height:20px;">20</div>
<div class="t" style="left:660.30px;top:797.67px;font-size:12.5px;color:#000;font-family:'Liberation Sans', sans-serif;line-height:20px;">30,000</div>
<div class="t" style="left:734.50px;top:797.67px;font-size:12.5px;color:#000;font-family:'Liberation Sans', sans-serif;line-height:20px;">600,000</div>
<div class="t" style="left:868.20px;top:797.67px;font-size:12.5px;color:#000;font-family:'Liberation Sans', sans-serif;line-height:20px;">0</div>
<div class="t" style="left:938.40px;top:797.67px;font-size:12.5px;color:#000;font-family:'Liberation Sans', sans-serif;line-height:20px;">600,000</div>
<div class="t" style="left:1042.60px;top:797.67px;font-size:12.5px;color:#000;font-family:'Liberation Sans', sans-serif;line-height:20px;">0</div>
<div class="t" style="left:1101.80px;top:797.67px;font-size:12.5px;color:#000;font-family:'Liberation Sans', sans-serif;line-height:20px;">0</div>
<div class="t" style="left:1182.40px;top:797.67px;font-size:12.5px;color:#000;font-family:'Liberation Sans', sans-serif;line-height:20px;">0</div>
<div class="t" style="left:116.90px;top:817.05px;font-size:14.67px;color:#000;font-family:'Liberation Serif', serif;line-height:20px;letter-spacing:-0.191px;">DEO002300323</div>
<div class="t" style="left:220.30px;top:817.05px;font-size:14.67px;color:#000;font-family:'Liberation Serif', serif;line-height:20px;letter-spacing:-0.088px;">Phạm Đình Bảo Long</div>
<div class="t" style="left:528.40px;top:817.67px;font-size:12.5px;color:#000;font-family:'Liberation Sans', sans-serif;line-height:20px;">760,000</div>
<div class="t" style="left:625.50px;top:817.67px;font-size:12.5px;color:#000;font-family:'Liberation Sans', sans-serif;line-height:20px;">20</div>
<div class="t" style="left:660.30px;top:817.67px;font-size:12.5px;color:#000;font-family:'Liberation Sans', sans-serif;line-height:20px;">30,000</div>
<div class="t" style="left:734.50px;top:817.67px;font-size:12.5px;color:#000;font-family:'Liberation Sans', sans-serif;line-height:20px;">600,000</div>
<div class="t" style="left:868.20px;top:817.67px;font-size:12.5px;color:#000;font-family:'Liberation Sans', sans-serif;line-height:20px;">0</div>
<div class="t" style="left:938.40px;top:817.67px;font-size:12.5px;color:#000;font-family:'Liberation Sans', sans-serif;line-height:20px;">600,000</div>
<div class="t" style="left:1042.60px;top:817.67px;font-size:12.5px;color:#000;font-family:'Liberation Sans', sans-serif;line-height:20px;">0</div>
<div class="t" style="left:1101.80px;top:817.67px;font-size:12.5px;color:#000;font-family:'Liberation Sans', sans-serif;line-height:20px;">0</div>
<div class="t" style="left:1182.40px;top:817.67px;font-size:12.5px;color:#000;font-family:'Liberation Sans', sans-serif;line-height:20px;">0</div>
<div class="r" style="left:576px;top:275px;width:68px;height:2px;background:#217346;"></div>
<div class="r" style="left:576px;top:296px;width:68px;height:2px;background:#217346;"></div>
<div class="r" style="left:639px;top:293px;width:6px;height:6px;background:#217346;"></div>
<div class="r" style="left:640px;top:294px;width:4px;height:4px;background:#217346;"></div>
<div class="r" style="left:575px;top:244px;width:63px;height:589px;border:3px solid #f00"></div>
<div class="r" style="left:1196px;top:205px;width:19px;height:634px;background:#e6e6e6;"></div>
<div class="r" style="left:1196px;top:222px;width:17px;height:603px;background:#f0f0f0;"></div>
<div class="r" style="left:1197px;top:207px;width:13px;height:13px;border:1px solid #a6a6a6;background:#fff"></div>
<svg class="r" style="left:1199px;top:210px;" width="10" height="8" viewBox="0 0 10 8"><path d="M1 6h8L5 1.8z" fill="#222"/></svg>
<div class="r" style="left:1197px;top:221px;width:13px;height:375px;border:1px solid #a6a6a6;border-top-width:2px;background:#fff"></div>
<div class="r" style="left:1197px;top:824px;width:13px;height:13px;border:1px solid #a6a6a6;background:#fff"></div>
<svg class="r" style="left:1199px;top:827px;" width="10" height="8" viewBox="0 0 10 8"><path d="M1 2h8L5 6.2z" fill="#222"/></svg>
<div class="r" style="left:2px;top:839px;width:1213px;height:1px;background:#a9a9a9;"></div>
<div class="r" style="left:2px;top:840px;width:1213px;height:27px;background:#e6e6e6;"></div>
<div class="r" style="left:2px;top:867px;width:1213px;height:1px;background:#c8c8c8;"></div>
<div class="r" style="left:2px;top:868px;width:1213px;height:21px;background:#f3f3f3;"></div>
<svg class="r" style="left:28px;top:848px;" width="6" height="9" viewBox="0 0 6 9"><path d="M5 .5v8L1 4.5z" fill="#b4b4b4"/></svg>
<svg class="r" style="left:57px;top:848px;" width="6" height="9" viewBox="0 0 6 9"><path d="M1 .5v8L5 4.5z" fill="#217346"/></svg>
<div class="r" style="left:101px;top:840px;width:1px;height:23px;background:#b0b0b0;"></div>
<div class="r" style="left:102px;top:840px;width:74px;height:22px;background:#fff;"></div>
<div class="r" style="left:102px;top:862px;width:74px;height:2px;background:#217346;"></div>
<div class="t" style="left:114.60px;top:842.32px;font-size:13.5px;color:#217346;font-family:'Liberation Sans', sans-serif;line-height:20px;font-weight:bold;letter-spacing:-1.167px;">147_10A</div>
<div class="r" style="left:247px;top:845px;width:1px;height:17px;background:#a0a0a0;"></div>
<div class="r" style="left:319px;top:845px;width:1px;height:17px;background:#a0a0a0;"></div>
<div class="r" style="left:392px;top:845px;width:1px;height:17px;background:#a0a0a0;"></div>
<div class="r" style="left:464px;top:845px;width:1px;height:17px;background:#a0a0a0;"></div>
<div class="r" style="left:609px;top:845px;width:1px;height:17px;background:#a0a0a0;"></div>
<div class="t" style="left:187.90px;top:842.67px;font-size:12.5px;color:#505050;font-family:'Liberation Sans', sans-serif;line-height:20px;letter-spacing:-0.783px;">148_10B</div>
<div class="t" style="left:259.20px;top:842.67px;font-size:12.5px;color:#505050;font-family:'Liberation Sans', sans-serif;line-height:20px;letter-spacing:-0.550px;">149_10C</div>
<div class="t" style="left:331.90px;top:842.67px;font-size:12.5px;color:#505050;font-family:'Liberation Sans', sans-serif;line-height:20px;letter-spacing:-0.517px;">150_11A</div>
<div class="t" style="left:405.20px;top:842.67px;font-size:12.5px;color:#505050;font-family:'Liberation Sans', sans-serif;line-height:20px;letter-spacing:-0.633px;">151_11B</div>
<div class="t" style="left:477.00px;top:842.67px;font-size:12.5px;color:#505050;font-family:'Liberation Sans', sans-serif;line-height:20px;letter-spacing:-0.533px;">152_11C</div>
<div class="t" style="left:548.90px;top:842.67px;font-size:12.5px;color:#505050;font-family:'Liberation Sans', sans-serif;line-height:20px;letter-spacing:-0.667px;">154_12A</div>
<div class="t" style="left:622.00px;top:842.67px;font-size:12.5px;color:#505050;font-family:'Liberation Sans', sans-serif;line-height:20px;letter-spacing:-0.700px;">155_12</div>
<div class="r" style="left:670px;top:855px;width:2px;height:2px;background:#217346;"></div>
<div class="r" style="left:674px;top:855px;width:2px;height:2px;background:#217346;"></div>
<div class="r" style="left:678px;top:855px;width:2px;height:2px;background:#217346;"></div>
<svg class="r" style="left:694px;top:844px;" width="17" height="17" viewBox="0 0 17 17"><circle cx="8.5" cy="8.5" r="7.5" fill="none" stroke="#c8c8c8" stroke-width="1.2"/><path d="M8.5 4v9M4 8.5h9" stroke="#c8c8c8" stroke-width="1.5"/></svg>
<div class="r" style="left:730px;top:847px;width:2px;height:2px;background:#a8a8a8;"></div>
<div class="r" style="left:730px;top:851px;width:2px;height:2px;background:#a8a8a8;"></div>
<div class="r" style="left:730px;top:855px;width:2px;height:2px;background:#a8a8a8;"></div>
<div class="r" style="left:747px;top:845px;width:13px;height:14px;border:1px solid #a6a6a6;background:#fff"></div>
<svg class="r" style="left:751px;top:848px;" width="7" height="9" viewBox="0 0 7 9"><path d="M5.5 .5v8L1.5 4.5z" fill="#222"/></svg>
<div class="r" style="left:762px;top:846px;width:178px;height:14px;background:#f0f0f0;"></div>
<div class="r" style="left:940px;top:846px;width:235px;height:13px;border:1px solid #a6a6a6;background:#fff"></div>
<div class="r" style="left:1176px;top:846px;width:14px;height:13px;border:1px solid #a6a6a6;background:#fff"></div>
<svg class="r" style="left:1180px;top:849px;" width="7" height="9" viewBox="0 0 7 9"><path d="M1.5 .5v8L5.5 4.5z" fill="#222"/></svg>
<div class="r" style="left:97px;top:837px;width:436px;height:24px;border:3px solid #f00"></div>
<div class="t" style="left:13.20px;top:868.52px;font-size:11.5px;color:#333;font-family:'Liberation Sans', sans-serif;line-height:20px;letter-spacing:-0.625px;">Ready</div>
<svg class="r" style="left:60px;top:868px;" width="22" height="20" viewBox="0 0 22 20"><path d="M5.35 5.96A4.9 4.9 0 1 0 12.04 12.65" fill="none" stroke="#444" stroke-width="1.4" stroke-dasharray="2.3 1.5"/><path d="M9.5 2.8v5.5" stroke="#444" stroke-width="1.3"/><path d="M7.3 7.6h4.4L9.5 10.3z" fill="#444"/><text x="11.6" y="17.6" font-size="13.5" font-weight="bold" fill="#444" font-family="Liberation Sans">?</text></svg>
<div class="r" style="left:904px;top:868px;width:40px;height:21px;background:#c8c8c8;"></div>
<svg class="r" style="left:915px;top:871px;" width="17" height="15" viewBox="0 0 17 15"><path d="M.5 .5h16v14h-16zM.5 5.5h16M.5 10h16M6 .5v14M11 .5v14" fill="none" stroke="#666" stroke-width="1"/></svg>
<svg class="r" style="left:955px;top:871px;" width="17" height="15" viewBox="0 0 17 15"><rect x=".5" y=".5" width="16" height="14" fill="none" stroke="#666"/><rect x="3.5" y="3.5" width="10" height="8" fill="none" stroke="#666"/><path d="M5.5 5.5h6M5.5 7.5h6M5.5 9.5h6" stroke="#666" stroke-width=".8"/></svg>
<svg class="r" style="left:995px;top:871px;" width="17" height="15" viewBox="0 0 17 15"><path d="M.5 .5h16v14h-16zM.5 9.5h10V.5M6 .5v9" fill="none" stroke="#666"/></svg>
<div class="r" style="left:1031px;top:878px;width:9px;height:1px;background:#555;"></div>
<div class="r" style="left:1043px;top:878px;width:100px;height:1px;background:#777;"></div>
<div class="r" style="left:1091px;top:872px;width:5px;height:13px;background:#444;"></div>
<div class="r" style="left:1147px;top:878px;width:9px;height:1px;background:#555;"></div>
<div class="r" style="left:1151px;top:874px;width:1px;height:9px;background:#555;"></div>
<div class="t" style="left:1169.40px;top:868.84px;font-size:12px;color:#333;font-family:'Liberation Sans', sans-serif;line-height:20px;letter-spacing:-1.567px;">100%</div>
</body></html>
